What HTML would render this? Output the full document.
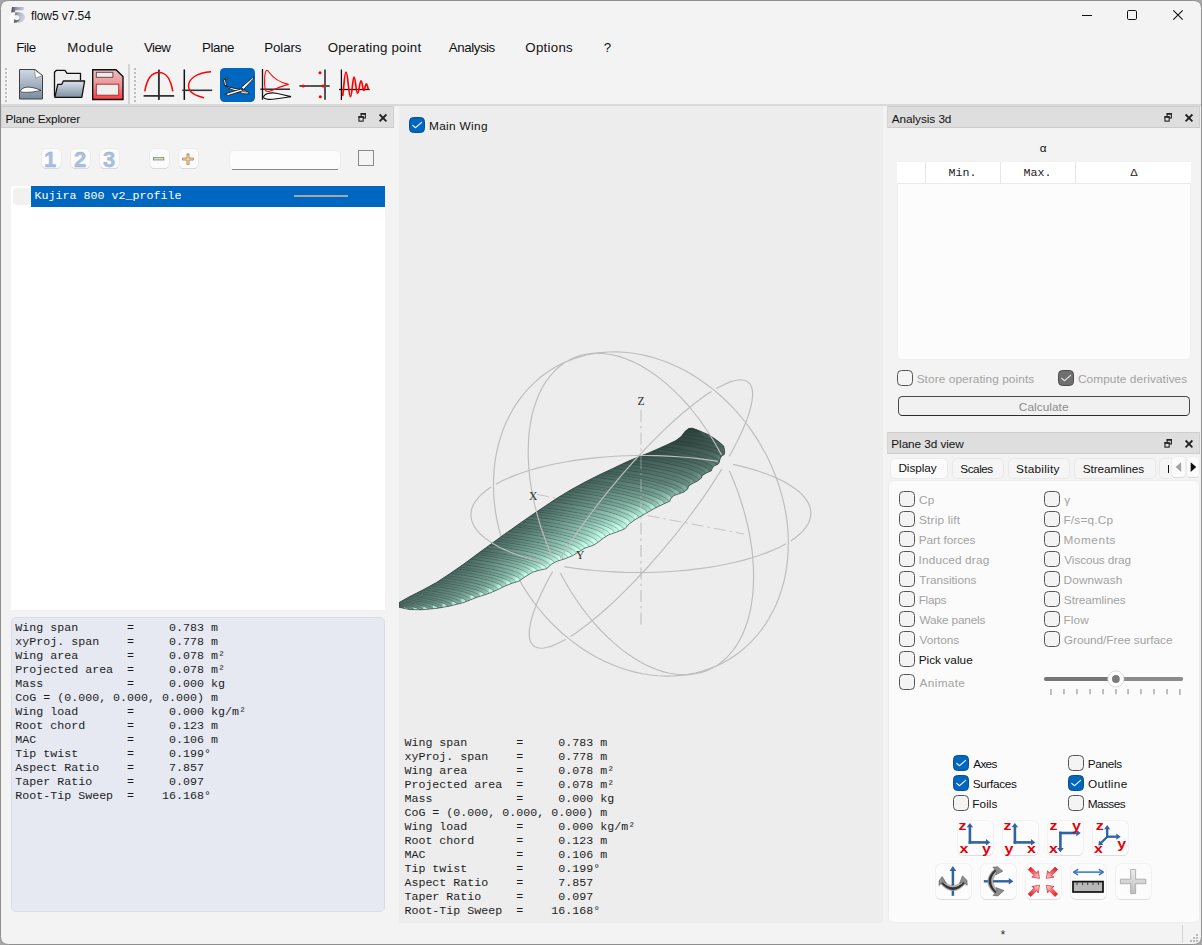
<!DOCTYPE html>
<html>
<head>
<meta charset="utf-8">
<title>flow5 v7.54</title>
<style>
html,body{margin:0;padding:0;}
body{width:1202px;height:945px;overflow:hidden;background:#f3f3f3;font-family:"Liberation Sans",sans-serif;font-size:12px;color:#000;position:relative;}
#win{position:absolute;left:0;top:0;width:1202px;height:945px;background:#f3f3f3;overflow:hidden;}
.abs{position:absolute;}
.t{position:absolute;white-space:pre;line-height:1;}
svg{overflow:visible;}
</style>
</head>
<body>
<div id="win">
<!-- chrome -->
<svg class="abs" style="left:8px;top:5px;" width="20" height="20" viewBox="8 5 20 20" >
<defs><linearGradient id="g5a" x1="0" y1="0" x2="1" y2="0"><stop offset="0" stop-color="#484853"/><stop offset="0.45" stop-color="#9a9aab"/><stop offset="1" stop-color="#c9c9dc"/></linearGradient>
<linearGradient id="g5b" x1="0" y1="0" x2="1" y2="0.25"><stop offset="0" stop-color="#5d5d6a"/><stop offset="0.5" stop-color="#b4b4c6"/><stop offset="1" stop-color="#cfcfe0"/></linearGradient></defs>
<path d="M12 7.1 H23.8 V10.3 H15.3 L14.9 12.9 L11.2 12.6 Z" fill="url(#g5a)"/>
<path d="M14.4 12.7 C17.5 11.7 24.9 12.2 24.9 17.2 C24.9 21.9 20 23 13.6 22.7 L13.8 19.6 C14.6 20.4 19.4 21 19.4 17.6 C19.4 15.2 17 15 14.2 15.6 Z" fill="url(#g5b)"/>
<path d="M13.6 22.7 L13.9 18.8 C15 20.6 19 20.8 19.5 18 C19.8 20.4 17.5 22.9 13.6 22.7 Z" fill="#686876"/>
<circle cx="17.3" cy="18" r="1.9" fill="#f4f4f8"/>
<path d="M10.2 22.8 L10.5 17.5 L9.1 17.5 L9.2 15.8 L10.6 15.8 C10.7 13.2 12.2 12.2 14.9 12.6 L14.8 14.6 C13.9 14.4 13.6 14.9 13.6 15.8 L15 15.8 L14.9 17.5 L13.6 17.5 L13.5 22.8 Z" fill="#ffffff" stroke="#ffffff" stroke-width="0.5"/>
</svg>
<div class="t" style="left:30.92px;top:10.00px;font-family:'Liberation Sans',sans-serif;font-size:12.00px;letter-spacing:-0.078px;color:#111;">flow5 v7.54</div>
<svg class="abs" style="left:1080px;top:5px;" width="115" height="22" viewBox="1080 5 115 22" >
<path d="M1082 15.5 H1092" stroke="#111" stroke-width="1" fill="none"/>
<rect x="1127.5" y="10.5" width="9" height="9" rx="1.2" fill="none" stroke="#111" stroke-width="1"/>
<path d="M1173.3 10.3 L1182.7 19.7 M1182.7 10.3 L1173.3 19.7" stroke="#111" stroke-width="1.1" fill="none"/>
</svg>
<div class="t" style="left:16.20px;top:41.00px;font-family:'Liberation Sans',sans-serif;font-size:13.30px;letter-spacing:-0.484px;color:#111;">File</div>
<div class="t" style="left:67.30px;top:41.00px;font-family:'Liberation Sans',sans-serif;font-size:13.30px;letter-spacing:0.454px;color:#111;">Module</div>
<div class="t" style="left:143.93px;top:41.00px;font-family:'Liberation Sans',sans-serif;font-size:13.30px;letter-spacing:-0.521px;color:#111;">View</div>
<div class="t" style="left:202.10px;top:41.00px;font-family:'Liberation Sans',sans-serif;font-size:13.30px;letter-spacing:-0.438px;color:#111;">Plane</div>
<div class="t" style="left:264.30px;top:41.00px;font-family:'Liberation Sans',sans-serif;font-size:13.30px;letter-spacing:-0.129px;color:#111;">Polars</div>
<div class="t" style="left:327.67px;top:41.00px;font-family:'Liberation Sans',sans-serif;font-size:13.30px;letter-spacing:0.178px;color:#111;">Operating point</div>
<div class="t" style="left:448.77px;top:41.00px;font-family:'Liberation Sans',sans-serif;font-size:13.30px;letter-spacing:-0.430px;color:#111;">Analysis</div>
<div class="t" style="left:525.37px;top:41.00px;font-family:'Liberation Sans',sans-serif;font-size:13.30px;letter-spacing:0.258px;color:#111;">Options</div>
<div class="t" style="left:603.77px;top:41.00px;font-family:'Liberation Sans',sans-serif;font-size:13.30px;letter-spacing:0.000px;color:#111;">?</div>
<div class="abs" style="left:0px;top:104px;width:1202px;height:2px;background:#d9d9d9;"></div>
<svg class="abs" style="left:0px;top:60px;" width="400" height="46" viewBox="0 60 400 46" ><rect x="5" y="68" width="2" height="2" fill="#bdbdbd"/><rect x="7" y="68" width="1" height="1" fill="#fdfdfd"/><rect x="5" y="72" width="2" height="2" fill="#bdbdbd"/><rect x="7" y="72" width="1" height="1" fill="#fdfdfd"/><rect x="5" y="76" width="2" height="2" fill="#bdbdbd"/><rect x="7" y="76" width="1" height="1" fill="#fdfdfd"/><rect x="5" y="80" width="2" height="2" fill="#bdbdbd"/><rect x="7" y="80" width="1" height="1" fill="#fdfdfd"/><rect x="5" y="84" width="2" height="2" fill="#bdbdbd"/><rect x="7" y="84" width="1" height="1" fill="#fdfdfd"/><rect x="5" y="88" width="2" height="2" fill="#bdbdbd"/><rect x="7" y="88" width="1" height="1" fill="#fdfdfd"/><rect x="5" y="92" width="2" height="2" fill="#bdbdbd"/><rect x="7" y="92" width="1" height="1" fill="#fdfdfd"/><rect x="5" y="96" width="2" height="2" fill="#bdbdbd"/><rect x="7" y="96" width="1" height="1" fill="#fdfdfd"/><rect x="5" y="100" width="2" height="2" fill="#bdbdbd"/><rect x="7" y="100" width="1" height="1" fill="#fdfdfd"/><rect x="134" y="68" width="2" height="2" fill="#bdbdbd"/><rect x="136" y="68" width="1" height="1" fill="#fdfdfd"/><rect x="134" y="72" width="2" height="2" fill="#bdbdbd"/><rect x="136" y="72" width="1" height="1" fill="#fdfdfd"/><rect x="134" y="76" width="2" height="2" fill="#bdbdbd"/><rect x="136" y="76" width="1" height="1" fill="#fdfdfd"/><rect x="134" y="80" width="2" height="2" fill="#bdbdbd"/><rect x="136" y="80" width="1" height="1" fill="#fdfdfd"/><rect x="134" y="84" width="2" height="2" fill="#bdbdbd"/><rect x="136" y="84" width="1" height="1" fill="#fdfdfd"/><rect x="134" y="88" width="2" height="2" fill="#bdbdbd"/><rect x="136" y="88" width="1" height="1" fill="#fdfdfd"/><rect x="134" y="92" width="2" height="2" fill="#bdbdbd"/><rect x="136" y="92" width="1" height="1" fill="#fdfdfd"/><rect x="134" y="96" width="2" height="2" fill="#bdbdbd"/><rect x="136" y="96" width="1" height="1" fill="#fdfdfd"/><rect x="134" y="100" width="2" height="2" fill="#bdbdbd"/><rect x="136" y="100" width="1" height="1" fill="#fdfdfd"/>
<defs>
<linearGradient id="gdoc" x1="0" y1="0" x2="0" y2="1"><stop offset="0" stop-color="#cfd9e5"/><stop offset="1" stop-color="#7b8b9d"/></linearGradient>
<linearGradient id="gfold" x1="0" y1="0" x2="0" y2="1"><stop offset="0" stop-color="#dbe3ec"/><stop offset="1" stop-color="#7f8fa2"/></linearGradient>
<linearGradient id="gsave" x1="0" y1="0" x2="0" y2="1"><stop offset="0" stop-color="#e6c3c4"/><stop offset="0.55" stop-color="#f08e90"/><stop offset="1" stop-color="#ff3a3c"/></linearGradient>
</defs>
<!-- new -->
<path d="M19.5 69.5 H35 L42.5 75.5 V99 H19.5 Z" fill="url(#gdoc)" stroke="#3c4046" stroke-width="1"/>
<path d="M34.5 69.8 L42.2 75.6 L35.6 78.2 Z" fill="#fff" stroke="#555" stroke-width="0.5"/>
<path d="M20.6 90.8 C22.5 86.5 30 85.5 41 90.4 C36 91.8 27 92.8 22.5 92.2 C21 92 20.4 91.5 20.6 90.8 Z" fill="#fff" stroke="#222" stroke-width="0.7"/>
<!-- open -->
<path d="M54.5 96.5 V72.3 L56.5 70.3 H65 L67 73.3 H80.5 V80.5" fill="#f0f0f0" stroke="#111" stroke-width="1.3" stroke-linejoin="round"/>
<path d="M54.8 97.3 L57.8 84.3 H61.8 L63.3 81 H84.6 L81.8 97.3 Z" fill="url(#gfold)" stroke="#111" stroke-width="1.3" stroke-linejoin="round"/>
<!-- save -->
<path d="M92.7 69.7 H116 L123 76.5 V99.5 H92.7 Z" fill="url(#gsave)" stroke="#111" stroke-width="1.4" stroke-linejoin="miter"/>
<rect x="96.3" y="72.3" width="16.6" height="5" fill="#ececec" stroke="#6d3a3c" stroke-width="0.9"/>
<rect x="96.3" y="84.2" width="22.4" height="11" fill="#eeeeee" stroke="#a83236" stroke-width="1"/>
<!-- separator -->
<rect x="128" y="64" width="2" height="40" fill="#d4d4d4"/>
<!-- icon 1: arch -->
<path d="M158.9 69.6 V99.9" stroke="#333" stroke-width="1.9"/>
<path d="M143.6 95.9 H174.2" stroke="#2a2a2a" stroke-width="1.7"/>
<path d="M144.8 91.4 C147 78 151.5 72.6 158.9 72.6 C166.3 72.6 170.5 78 172.8 91.4" fill="none" stroke="#f00" stroke-width="1.5"/>
<!-- icon 2 -->
<path d="M184.3 69.5 V99.9" stroke="#111" stroke-width="1.5"/>
<path d="M182.3 90.3 H212.2" stroke="#333" stroke-width="1.6"/>
<path d="M211 71.7 C197 72.5 188.5 79 188.5 86 C188.5 91 194 95.5 204 97.7" fill="none" stroke="#f00" stroke-width="1.4"/>
<!-- icon 3 selected -->
<rect x="220" y="68" width="35" height="34" rx="4.5" fill="#0067c0"/>
<g stroke="#1a1a1a" stroke-width="0.9" fill="#fff" stroke-linejoin="round">
<path d="M222.6 79.6 L227.6 77.6 L227.9 78.6 L223.4 80.6 Z"/>
<path d="M223.6 80 L225.4 79.3 L226.6 86.3 L224.6 85.6 Z"/>
<path d="M224.8 85.4 C228 87.6 236 88.6 241.5 89.4 C246 90.3 248.8 92.2 248.8 93.6 C246.6 94.4 243 93.8 240 92.4 C235 90.6 228 89 224.8 85.4 Z"/>
<path d="M241.4 87.2 L252.6 77.6 L253.8 76.8 L253.4 79 L243.6 89.4 Z"/>
<path d="M240.8 89 L243.4 90.6 L228.4 95.4 L224.8 94.2 L226 93.6 Z"/>
<path d="M242.6 90.4 C244.4 89.8 246.2 90.8 247 92.2 L243.4 92 Z" fill="#9db0c0" stroke-width="0.5"/>
</g>
<!-- icon 4 Cp -->
<path d="M262.5 69 V99.8" stroke="#111" stroke-width="1.3"/>
<path d="M260.3 89.2 H290" stroke="#111" stroke-width="1.3"/>
<path d="M265.2 89.6 C264 82 264.6 70.6 266.8 70.3 C269.4 70 270.5 80.5 288.6 84.4 C280 86.2 272.6 90.6 268.4 91.4 C266.6 91.6 265.6 91 265.2 89.6 Z" fill="none" stroke="#f00" stroke-width="1.1"/>
<path d="M263.6 96.6 C264.4 93.6 270.4 92.2 276 93.3 C281.6 94.3 287 95.6 291 96.6 C285 97.6 274 99.6 268.6 99.4 C265.4 99.2 263.3 98.3 263.6 96.6 Z" fill="#fff" stroke="#111" stroke-width="1.1"/>
<!-- icon 5 root locus -->
<path d="M325 69.5 V99.8" stroke="#555" stroke-width="2"/>
<path d="M299.4 86 H329.7" stroke="#555" stroke-width="2"/>
<circle cx="303.2" cy="86" r="1.55" fill="#f00"/><circle cx="323" cy="86" r="1.55" fill="#f00"/>
<circle cx="320" cy="72.7" r="1.55" fill="#f00"/><circle cx="320.3" cy="96.8" r="1.55" fill="#f00"/>
<!-- icon 6 oscillation -->
<path d="M341.4 69.5 V100" stroke="#111" stroke-width="1.3"/>
<path d="M339 89.5 H369.7" stroke="#111" stroke-width="1.3"/>
<path d="M342.6 96 C343.6 92 344.4 72.2 346 72.2 C348 72.2 348.6 96.6 350.4 96.6 C352.2 96.6 352.6 77 354 77 C355.6 77 355.9 93.2 357.6 93.2 C359.2 93.2 359.6 80.8 361 80.8 C362.4 80.8 362.6 90.4 363.8 90.4 C365 90.4 365.2 83.8 366.3 83.8 C367.4 83.8 367.6 88.4 368.6 89.4" fill="none" stroke="#f00" stroke-width="1.7" stroke-linejoin="round"/>
</svg>
<!-- left -->
<div class="abs" style="left:1px;top:106px;width:393.3px;height:22px;background:#dedede;border-top:1px solid #cecece;border-bottom:1px solid #cbcbcb;border-right:1px solid #d0d0d0;border-left:1px solid #d4d4d4;box-sizing:border-box;"></div>
<div class="t" style="left:5.53px;top:114.00px;font-family:'Liberation Sans',sans-serif;font-size:11.80px;letter-spacing:-0.212px;color:#111;">Plane Explorer</div>
<svg class="abs" style="left:354.3px;top:106px;" width="40" height="22" viewBox="354.3 106 40 22" >
<rect x="361.45" y="113.65" width="4.2" height="4.4" fill="none" stroke="#222" stroke-width="1.1"/>
<rect x="360.90" y="113.10" width="5.3" height="1.6" fill="#222"/>
<rect x="359.25" y="116.75" width="4.2" height="4.4" fill="#dedede" stroke="#222" stroke-width="1.1"/>
<rect x="358.70" y="116.20" width="5.3" height="1.6" fill="#222"/>
<path d="M379.90 114.50 L386.70 121.30 M386.70 114.50 L379.90 121.30" stroke="#222" stroke-width="1.8" fill="none"/>
</svg>
<div class="abs" style="left:42px;top:149.3px;width:19.2px;height:19px;background:#fbfbfb;border-radius:4.5px;box-shadow:0 0 0 0.6px #e6e6e6, 0 1px 0 0 #cfcfcf;"></div>
<div class="abs" style="left:71px;top:149.3px;width:19.2px;height:19px;background:#fbfbfb;border-radius:4.5px;box-shadow:0 0 0 0.6px #e6e6e6, 0 1px 0 0 #cfcfcf;"></div>
<div class="abs" style="left:100px;top:149.3px;width:19.2px;height:19px;background:#fbfbfb;border-radius:4.5px;box-shadow:0 0 0 0.6px #e6e6e6, 0 1px 0 0 #cfcfcf;"></div>
<div class="abs" style="left:150px;top:149.3px;width:19.2px;height:19px;background:#fbfbfb;border-radius:4.5px;box-shadow:0 0 0 0.6px #e6e6e6, 0 1px 0 0 #cfcfcf;"></div>
<div class="abs" style="left:179px;top:149.3px;width:19.2px;height:19px;background:#fbfbfb;border-radius:4.5px;box-shadow:0 0 0 0.6px #e6e6e6, 0 1px 0 0 #cfcfcf;"></div>
<svg class="abs" style="left:40px;top:145px;" width="165" height="30" viewBox="40 145 165 30" ><text x="50.2" y="167" font-family="Liberation Sans" font-weight="bold" font-size="22" text-anchor="middle" fill="#aac0dc" stroke="#94abca" stroke-width="0.35">1</text><text x="80" y="167" font-family="Liberation Sans" font-weight="bold" font-size="22" text-anchor="middle" fill="#aac0dc" stroke="#94abca" stroke-width="0.35">2</text><text x="109" y="167" font-family="Liberation Sans" font-weight="bold" font-size="22" text-anchor="middle" fill="#aac0dc" stroke="#94abca" stroke-width="0.35">3</text><rect x="153.3" y="157.6" width="10.6" height="2.4" fill="#cbe2b6" stroke="#7a7a7a" stroke-width="0.7"/><path d="M186.9 153.8 H189.1 V158 H193.4 V160.1 H189.1 V164.4 H186.9 V160.1 H182.5 V158 H186.9 Z" fill="#fbcfa2" stroke="#7d5c3a" stroke-width="0.55"/></svg>
<div class="abs" style="left:229px;top:150px;width:112px;height:20px;background:#fcfcfc;border:1px solid #ececec;border-radius:5px;box-sizing:border-box;"></div>
<div class="abs" style="left:232px;top:169px;width:105.5px;height:1px;background:#868686;"></div>
<div class="abs" style="left:358px;top:150px;width:16px;height:16px;background:#f4f4f4;border:1px solid #8a8a8a;box-sizing:border-box;"></div>
<div class="abs" style="left:11px;top:186px;width:374px;height:424px;background:#ffffff;"></div>
<div class="abs" style="left:13px;top:188px;width:18px;height:17px;background:#f1f1f1;border-radius:4px;"></div>
<div class="abs" style="left:31px;top:186px;width:354px;height:21px;background:#0067c0;"></div>
<div class="t" style="left:34.6px;top:191.00px;font-family:'Liberation Mono',monospace;font-size:11.667px;letter-spacing:0.00px;color:#fff;transform:scaleY(0.900);transform-origin:0 8px;">Kujira 800 v2_profile</div>
<div class="abs" style="left:294px;top:195px;width:54px;height:2px;background:#a6a6a6;"></div>
<div class="abs" style="left:11px;top:617px;width:374px;height:295px;background:#e6e9f2;border:1px solid #d9dde7;border-radius:5px;box-sizing:border-box;"></div>
<div class="t" style="left:15.20px;top:623.00px;font-family:'Liberation Mono',monospace;font-size:11.667px;letter-spacing:0.00px;color:#1c1c1c;transform:scaleY(0.900);transform-origin:0 8px;">Wing span       =     0.783 m</div>
<div class="t" style="left:15.20px;top:637.00px;font-family:'Liberation Mono',monospace;font-size:11.667px;letter-spacing:0.00px;color:#1c1c1c;transform:scaleY(0.900);transform-origin:0 8px;">xyProj. span    =     0.778 m</div>
<div class="t" style="left:15.20px;top:651.00px;font-family:'Liberation Mono',monospace;font-size:11.667px;letter-spacing:0.00px;color:#1c1c1c;transform:scaleY(0.900);transform-origin:0 8px;">Wing area       =     0.078 m²</div>
<div class="t" style="left:15.20px;top:665.00px;font-family:'Liberation Mono',monospace;font-size:11.667px;letter-spacing:0.00px;color:#1c1c1c;transform:scaleY(0.900);transform-origin:0 8px;">Projected area  =     0.078 m²</div>
<div class="t" style="left:15.20px;top:679.00px;font-family:'Liberation Mono',monospace;font-size:11.667px;letter-spacing:0.00px;color:#1c1c1c;transform:scaleY(0.900);transform-origin:0 8px;">Mass            =     0.000 kg</div>
<div class="t" style="left:15.20px;top:693.00px;font-family:'Liberation Mono',monospace;font-size:11.667px;letter-spacing:0.00px;color:#1c1c1c;transform:scaleY(0.900);transform-origin:0 8px;">CoG = (0.000, 0.000, 0.000) m</div>
<div class="t" style="left:15.20px;top:707.00px;font-family:'Liberation Mono',monospace;font-size:11.667px;letter-spacing:0.00px;color:#1c1c1c;transform:scaleY(0.900);transform-origin:0 8px;">Wing load       =     0.000 kg/m²</div>
<div class="t" style="left:15.20px;top:721.00px;font-family:'Liberation Mono',monospace;font-size:11.667px;letter-spacing:0.00px;color:#1c1c1c;transform:scaleY(0.900);transform-origin:0 8px;">Root chord      =     0.123 m</div>
<div class="t" style="left:15.20px;top:735.00px;font-family:'Liberation Mono',monospace;font-size:11.667px;letter-spacing:0.00px;color:#1c1c1c;transform:scaleY(0.900);transform-origin:0 8px;">MAC             =     0.106 m</div>
<div class="t" style="left:15.20px;top:749.00px;font-family:'Liberation Mono',monospace;font-size:11.667px;letter-spacing:0.00px;color:#1c1c1c;transform:scaleY(0.900);transform-origin:0 8px;">Tip twist       =     0.199°</div>
<div class="t" style="left:15.20px;top:763.00px;font-family:'Liberation Mono',monospace;font-size:11.667px;letter-spacing:0.00px;color:#1c1c1c;transform:scaleY(0.900);transform-origin:0 8px;">Aspect Ratio    =     7.857</div>
<div class="t" style="left:15.20px;top:777.00px;font-family:'Liberation Mono',monospace;font-size:11.667px;letter-spacing:0.00px;color:#1c1c1c;transform:scaleY(0.900);transform-origin:0 8px;">Taper Ratio     =     0.097</div>
<div class="t" style="left:15.20px;top:791.00px;font-family:'Liberation Mono',monospace;font-size:11.667px;letter-spacing:0.00px;color:#1c1c1c;transform:scaleY(0.900);transform-origin:0 8px;">Root-Tip Sweep  =    16.168°</div>
<!-- gl -->
<div class="abs" style="left:399px;top:106px;width:484px;height:817px;background:#ededed;overflow:hidden;"></div>
<div class="abs" style="left:409px;top:117px;width:16px;height:16px;background:#0067c0;border:1px solid #0b4f8f;border-radius:4.5px;box-sizing:border-box;"></div>
<svg class="abs" style="left:409px;top:117px;" width="16" height="16" viewBox="409 117 16 16" ><path d="M412.7 125.4 L415.6 127.7 L421.6 122.4" fill="none" stroke="#fff" stroke-width="1.1" stroke-linecap="round" stroke-linejoin="round"/></svg>
<div class="t" style="left:429.03px;top:121.00px;font-family:'Liberation Sans',sans-serif;font-size:11.80px;letter-spacing:0.348px;color:#111;">Main Wing</div>
<div class="abs" style="left:399px;top:106px;width:484px;height:817px;overflow:hidden;"><svg class="abs" style="left:0;top:0" width="484" height="817" viewBox="399 106 484 817"><g fill="none" stroke="#bdbdbd" stroke-width="1.15"><path d="M552.9 368.6 L559.2 365.0 L565.7 361.9 L572.5 359.2 L579.4 356.9 L586.5 355.0 L593.7 353.6 L601.1 352.6 L608.6 352.0 L616.2 351.9 L623.8 352.2 L631.5 353.0 L639.2 354.3 L646.9 355.9 L654.6 358.0 L662.3 360.5 L669.9 363.5 L677.4 366.8 L684.9 370.6 L692.2 374.7 L699.3 379.3 L706.3 384.2 L713.2 389.4 L719.8 395.0 L726.2 401.0 L732.4 407.2 L738.3 413.7 L744.0 420.5 L749.4 427.6 L754.4 434.9 L759.2 442.4 L763.6 450.1 L767.8 458.0 L771.5 466.0 L774.9 474.2 L778.0 482.5 L780.6 490.9 L782.9 499.3 L784.8 507.7 L786.3 516.2 L787.4 524.7 L788.1 533.2 L788.3 541.6 L788.2 549.9 L787.7 558.1 L786.8 566.2 L785.5 574.2 L783.8 582.0 L781.6 589.6 L779.2 597.0 L776.3 604.2 L773.0 611.1 L769.4 617.7 L765.5 624.1 L761.2 630.2 L756.5 636.0 L751.6 641.4 L746.3 646.4 L740.8 651.2 L735.0 655.5 L728.9 659.4"/><path d="M728.9 659.4 L722.6 663.0 L716.1 666.1 L709.3 668.8 L702.4 671.1 L695.3 673.0 L688.1 674.4 L680.7 675.4 L673.2 676.0 L665.6 676.1 L658.0 675.8 L650.3 675.0 L642.6 673.7 L634.9 672.1 L627.2 670.0 L619.5 667.5 L611.9 664.5 L604.4 661.2 L596.9 657.4 L589.6 653.3 L582.5 648.7 L575.5 643.8 L568.6 638.6 L562.0 633.0 L555.6 627.0 L549.4 620.8 L543.5 614.3 L537.8 607.5 L532.4 600.4 L527.4 593.1 L522.6 585.6 L518.2 577.9 L514.0 570.0 L510.3 562.0 L506.9 553.8 L503.8 545.5 L501.2 537.1 L498.9 528.7 L497.0 520.3 L495.5 511.8 L494.4 503.3 L493.7 494.8 L493.5 486.4 L493.6 478.1 L494.1 469.9 L495.0 461.8 L496.3 453.8 L498.0 446.0 L500.2 438.4 L502.6 431.0 L505.5 423.8 L508.8 416.9 L512.4 410.3 L516.3 403.9 L520.6 397.8 L525.3 392.0 L530.2 386.6 L535.5 381.6 L541.0 376.8 L546.8 372.5 L552.9 368.6"/></g><path d="M537 494.4 L744 534" stroke="#c2c2c2" stroke-width="0.95" stroke-dasharray="12 4 2.5 4" fill="none"/><path d="M641 410 V625" stroke="#c6c6c6" stroke-width="1.3" stroke-dasharray="12 4 2.5 4" fill="none"/><defs><linearGradient id="w0" gradientUnits="userSpaceOnUse" x1="394.6" y1="607.9" x2="391.1" y2="606.9"><stop offset="0" stop-color="#b0e5d2"/><stop offset="0.035" stop-color="#84ada0"/><stop offset="0.1" stop-color="#789e92"/><stop offset="0.25" stop-color="#6a8e83"/><stop offset="0.5" stop-color="#5e8076"/><stop offset="0.75" stop-color="#56766d"/><stop offset="1" stop-color="#506f66"/></linearGradient><linearGradient id="w2" gradientUnits="userSpaceOnUse" x1="404.2" y1="608.4" x2="393.6" y2="605.6"><stop offset="0" stop-color="#b0e5d2"/><stop offset="0.035" stop-color="#84ada0"/><stop offset="0.1" stop-color="#789e92"/><stop offset="0.25" stop-color="#6a8e83"/><stop offset="0.5" stop-color="#5e8076"/><stop offset="0.75" stop-color="#56766d"/><stop offset="1" stop-color="#506f66"/></linearGradient><linearGradient id="w4" gradientUnits="userSpaceOnUse" x1="413.8" y1="609.6" x2="395.3" y2="604.6"><stop offset="0" stop-color="#b1e6d3"/><stop offset="0.035" stop-color="#83ac9f"/><stop offset="0.1" stop-color="#789e92"/><stop offset="0.25" stop-color="#6a8e83"/><stop offset="0.5" stop-color="#5e8076"/><stop offset="0.75" stop-color="#56766d"/><stop offset="1" stop-color="#506f66"/></linearGradient><linearGradient id="w6" gradientUnits="userSpaceOnUse" x1="423.5" y1="609.4" x2="398.6" y2="602.8"><stop offset="0" stop-color="#b1e6d3"/><stop offset="0.035" stop-color="#83ac9f"/><stop offset="0.1" stop-color="#789e92"/><stop offset="0.25" stop-color="#6a8e83"/><stop offset="0.5" stop-color="#5e8076"/><stop offset="0.75" stop-color="#56766d"/><stop offset="1" stop-color="#506f66"/></linearGradient><linearGradient id="w8" gradientUnits="userSpaceOnUse" x1="433.1" y1="608.7" x2="402.7" y2="600.5"><stop offset="0" stop-color="#b1e6d3"/><stop offset="0.035" stop-color="#83ac9f"/><stop offset="0.1" stop-color="#779e92"/><stop offset="0.25" stop-color="#6a8f84"/><stop offset="0.5" stop-color="#5f8177"/><stop offset="0.75" stop-color="#56776e"/><stop offset="1" stop-color="#506f66"/></linearGradient><linearGradient id="w10" gradientUnits="userSpaceOnUse" x1="442.7" y1="607.3" x2="407.4" y2="597.8"><stop offset="0" stop-color="#b2e7d4"/><stop offset="0.035" stop-color="#82ab9e"/><stop offset="0.1" stop-color="#779e92"/><stop offset="0.25" stop-color="#6a8f84"/><stop offset="0.5" stop-color="#5f8177"/><stop offset="0.75" stop-color="#56776e"/><stop offset="1" stop-color="#506f66"/></linearGradient><linearGradient id="w12" gradientUnits="userSpaceOnUse" x1="452.2" y1="605.4" x2="413.0" y2="594.9"><stop offset="0" stop-color="#b3e8d5"/><stop offset="0.035" stop-color="#84ada0"/><stop offset="0.1" stop-color="#789f93"/><stop offset="0.25" stop-color="#6b9085"/><stop offset="0.5" stop-color="#5f8277"/><stop offset="0.75" stop-color="#56776e"/><stop offset="1" stop-color="#506f66"/></linearGradient><linearGradient id="w14" gradientUnits="userSpaceOnUse" x1="461.6" y1="602.9" x2="419.5" y2="591.6"><stop offset="0" stop-color="#b5ead7"/><stop offset="0.035" stop-color="#8ab5a8"/><stop offset="0.1" stop-color="#7da599"/><stop offset="0.25" stop-color="#6e9488"/><stop offset="0.5" stop-color="#61847a"/><stop offset="0.75" stop-color="#56786f"/><stop offset="1" stop-color="#4f6e66"/></linearGradient><linearGradient id="w16" gradientUnits="userSpaceOnUse" x1="470.8" y1="599.7" x2="426.6" y2="587.9"><stop offset="0" stop-color="#b8edda"/><stop offset="0.035" stop-color="#91beaf"/><stop offset="0.1" stop-color="#81ab9e"/><stop offset="0.25" stop-color="#71988b"/><stop offset="0.5" stop-color="#63867c"/><stop offset="0.75" stop-color="#57796f"/><stop offset="1" stop-color="#4e6e65"/></linearGradient><linearGradient id="w18" gradientUnits="userSpaceOnUse" x1="479.9" y1="596.5" x2="433.6" y2="584.0"><stop offset="0" stop-color="#baf0dd"/><stop offset="0.035" stop-color="#97c6b7"/><stop offset="0.1" stop-color="#85b1a3"/><stop offset="0.25" stop-color="#749c8f"/><stop offset="0.5" stop-color="#64897e"/><stop offset="0.75" stop-color="#577970"/><stop offset="1" stop-color="#4e6d65"/></linearGradient><linearGradient id="w20" gradientUnits="userSpaceOnUse" x1="489.0" y1="593.2" x2="440.1" y2="580.1"><stop offset="0" stop-color="#bdf3e0"/><stop offset="0.035" stop-color="#9dcebe"/><stop offset="0.1" stop-color="#8ab7a8"/><stop offset="0.25" stop-color="#769f92"/><stop offset="0.5" stop-color="#668b80"/><stop offset="0.75" stop-color="#587a70"/><stop offset="1" stop-color="#4d6d64"/></linearGradient><linearGradient id="w22" gradientUnits="userSpaceOnUse" x1="497.9" y1="589.4" x2="446.8" y2="575.7"><stop offset="0" stop-color="#bff5e2"/><stop offset="0.035" stop-color="#a4d6c5"/><stop offset="0.1" stop-color="#8ebdad"/><stop offset="0.25" stop-color="#79a395"/><stop offset="0.5" stop-color="#688d82"/><stop offset="0.75" stop-color="#587b71"/><stop offset="1" stop-color="#4c6c64"/></linearGradient><linearGradient id="w24" gradientUnits="userSpaceOnUse" x1="506.8" y1="585.5" x2="453.5" y2="571.2"><stop offset="0" stop-color="#c2f7e4"/><stop offset="0.035" stop-color="#a9dccb"/><stop offset="0.1" stop-color="#93c2b2"/><stop offset="0.25" stop-color="#7da89a"/><stop offset="0.5" stop-color="#6a9084"/><stop offset="0.75" stop-color="#597c72"/><stop offset="1" stop-color="#4b6b63"/></linearGradient><linearGradient id="w26" gradientUnits="userSpaceOnUse" x1="515.8" y1="581.9" x2="459.7" y2="566.9"><stop offset="0" stop-color="#c4f9e6"/><stop offset="0.035" stop-color="#aee2d0"/><stop offset="0.1" stop-color="#98c8b8"/><stop offset="0.25" stop-color="#81ad9f"/><stop offset="0.5" stop-color="#6c9487"/><stop offset="0.75" stop-color="#5a7d73"/><stop offset="1" stop-color="#4a6a62"/></linearGradient><linearGradient id="w28" gradientUnits="userSpaceOnUse" x1="524.3" y1="577.5" x2="466.5" y2="562.0"><stop offset="0" stop-color="#c6fbe8"/><stop offset="0.035" stop-color="#b3e7d5"/><stop offset="0.1" stop-color="#9ccebd"/><stop offset="0.25" stop-color="#85b3a3"/><stop offset="0.5" stop-color="#6e978a"/><stop offset="0.75" stop-color="#5a7e74"/><stop offset="1" stop-color="#4a6a62"/></linearGradient><linearGradient id="w30" gradientUnits="userSpaceOnUse" x1="532.7" y1="572.8" x2="473.3" y2="556.9"><stop offset="0" stop-color="#c8fdea"/><stop offset="0.035" stop-color="#b8ecda"/><stop offset="0.1" stop-color="#a1d3c2"/><stop offset="0.25" stop-color="#89b8a8"/><stop offset="0.5" stop-color="#70998d"/><stop offset="0.75" stop-color="#5b7f75"/><stop offset="1" stop-color="#496961"/></linearGradient><linearGradient id="w32" gradientUnits="userSpaceOnUse" x1="541.8" y1="569.8" x2="478.8" y2="552.9"><stop offset="0" stop-color="#cafeeb"/><stop offset="0.035" stop-color="#bcf1de"/><stop offset="0.1" stop-color="#a5d8c7"/><stop offset="0.25" stop-color="#8cbcac"/><stop offset="0.5" stop-color="#729c8f"/><stop offset="0.75" stop-color="#5c8076"/><stop offset="1" stop-color="#486860"/></linearGradient><linearGradient id="w34" gradientUnits="userSpaceOnUse" x1="550.4" y1="565.7" x2="485.2" y2="548.2"><stop offset="0" stop-color="#cbfeeb"/><stop offset="0.035" stop-color="#bdf2df"/><stop offset="0.1" stop-color="#a6dac9"/><stop offset="0.25" stop-color="#8dbdad"/><stop offset="0.5" stop-color="#739d90"/><stop offset="0.75" stop-color="#5c8076"/><stop offset="1" stop-color="#486860"/></linearGradient><linearGradient id="w36" gradientUnits="userSpaceOnUse" x1="558.7" y1="561.0" x2="492.1" y2="543.2"><stop offset="0" stop-color="#cbfeec"/><stop offset="0.035" stop-color="#bef3e0"/><stop offset="0.1" stop-color="#a8dbca"/><stop offset="0.25" stop-color="#8ebeae"/><stop offset="0.5" stop-color="#739d90"/><stop offset="0.75" stop-color="#5c8076"/><stop offset="1" stop-color="#486860"/></linearGradient><linearGradient id="w38" gradientUnits="userSpaceOnUse" x1="567.7" y1="557.6" x2="498.0" y2="538.9"><stop offset="0" stop-color="#cbfeec"/><stop offset="0.035" stop-color="#bff4e1"/><stop offset="0.1" stop-color="#a9ddcc"/><stop offset="0.25" stop-color="#8fbfaf"/><stop offset="0.5" stop-color="#739e91"/><stop offset="0.75" stop-color="#5c8177"/><stop offset="1" stop-color="#486860"/></linearGradient><linearGradient id="w40" gradientUnits="userSpaceOnUse" x1="576.4" y1="553.3" x2="504.7" y2="534.1"><stop offset="0" stop-color="#ccfeec"/><stop offset="0.035" stop-color="#c0f5e2"/><stop offset="0.1" stop-color="#aadecd"/><stop offset="0.25" stop-color="#90c1b1"/><stop offset="0.5" stop-color="#749e91"/><stop offset="0.75" stop-color="#5c8177"/><stop offset="1" stop-color="#486860"/></linearGradient><linearGradient id="w42" gradientUnits="userSpaceOnUse" x1="584.9" y1="548.7" x2="511.7" y2="529.1"><stop offset="0" stop-color="#ccffed"/><stop offset="0.035" stop-color="#c0f5e2"/><stop offset="0.1" stop-color="#abe0ce"/><stop offset="0.25" stop-color="#90c2b2"/><stop offset="0.5" stop-color="#749f92"/><stop offset="0.75" stop-color="#5d8177"/><stop offset="1" stop-color="#486860"/></linearGradient><linearGradient id="w44" gradientUnits="userSpaceOnUse" x1="593.6" y1="544.5" x2="518.4" y2="524.4"><stop offset="0" stop-color="#cdffed"/><stop offset="0.035" stop-color="#c1f6e3"/><stop offset="0.1" stop-color="#ace1d0"/><stop offset="0.25" stop-color="#91c3b3"/><stop offset="0.5" stop-color="#759f92"/><stop offset="0.75" stop-color="#5d8177"/><stop offset="1" stop-color="#486860"/></linearGradient><linearGradient id="w46" gradientUnits="userSpaceOnUse" x1="601.8" y1="539.5" x2="525.8" y2="519.2"><stop offset="0" stop-color="#cdffed"/><stop offset="0.035" stop-color="#c2f7e4"/><stop offset="0.1" stop-color="#ade3d1"/><stop offset="0.25" stop-color="#92c4b4"/><stop offset="0.5" stop-color="#75a093"/><stop offset="0.75" stop-color="#5d8278"/><stop offset="1" stop-color="#486860"/></linearGradient><linearGradient id="w48" gradientUnits="userSpaceOnUse" x1="610.1" y1="534.7" x2="533.2" y2="514.1"><stop offset="0" stop-color="#ceffee"/><stop offset="0.035" stop-color="#c3f8e5"/><stop offset="0.1" stop-color="#afe4d2"/><stop offset="0.25" stop-color="#93c5b5"/><stop offset="0.5" stop-color="#76a093"/><stop offset="0.75" stop-color="#5d8278"/><stop offset="1" stop-color="#486860"/></linearGradient><linearGradient id="w50" gradientUnits="userSpaceOnUse" x1="619.1" y1="531.0" x2="539.6" y2="509.7"><stop offset="0" stop-color="#ceffee"/><stop offset="0.035" stop-color="#c4f9e6"/><stop offset="0.1" stop-color="#b0e6d4"/><stop offset="0.25" stop-color="#94c6b6"/><stop offset="0.5" stop-color="#76a194"/><stop offset="0.75" stop-color="#5d8278"/><stop offset="1" stop-color="#486860"/></linearGradient><linearGradient id="w52" gradientUnits="userSpaceOnUse" x1="627.1" y1="526.1" x2="547.2" y2="504.7"><stop offset="0" stop-color="#c8fae9"/><stop offset="0.035" stop-color="#bdf1de"/><stop offset="0.1" stop-color="#a9ddcc"/><stop offset="0.25" stop-color="#8ebfaf"/><stop offset="0.5" stop-color="#739d91"/><stop offset="0.75" stop-color="#5c8177"/><stop offset="1" stop-color="#486860"/></linearGradient><linearGradient id="w54" gradientUnits="userSpaceOnUse" x1="634.7" y1="520.2" x2="555.8" y2="499.0"><stop offset="0" stop-color="#c1f4e3"/><stop offset="0.035" stop-color="#b5e8d6"/><stop offset="0.1" stop-color="#a1d4c3"/><stop offset="0.25" stop-color="#88b7a8"/><stop offset="0.5" stop-color="#70998d"/><stop offset="0.75" stop-color="#5b7f75"/><stop offset="1" stop-color="#47675f"/></linearGradient><linearGradient id="w56" gradientUnits="userSpaceOnUse" x1="642.9" y1="515.1" x2="564.0" y2="493.9"><stop offset="0" stop-color="#baeedc"/><stop offset="0.035" stop-color="#acdfce"/><stop offset="0.1" stop-color="#99caba"/><stop offset="0.25" stop-color="#82aea0"/><stop offset="0.5" stop-color="#6d9589"/><stop offset="0.75" stop-color="#5a7d73"/><stop offset="1" stop-color="#47675f"/></linearGradient><linearGradient id="w58" gradientUnits="userSpaceOnUse" x1="651.4" y1="510.3" x2="572.3" y2="489.1"><stop offset="0" stop-color="#b3e8d6"/><stop offset="0.035" stop-color="#a4d5c5"/><stop offset="0.1" stop-color="#91bfb0"/><stop offset="0.25" stop-color="#7ba698"/><stop offset="0.5" stop-color="#699185"/><stop offset="0.75" stop-color="#597c72"/><stop offset="1" stop-color="#46665e"/></linearGradient><linearGradient id="w60" gradientUnits="userSpaceOnUse" x1="660.0" y1="505.8" x2="580.5" y2="484.5"><stop offset="0" stop-color="#a8dbca"/><stop offset="0.035" stop-color="#99c8b9"/><stop offset="0.1" stop-color="#87b4a5"/><stop offset="0.25" stop-color="#749d90"/><stop offset="0.5" stop-color="#658b7f"/><stop offset="0.75" stop-color="#56786f"/><stop offset="1" stop-color="#45655d"/></linearGradient><linearGradient id="w62" gradientUnits="userSpaceOnUse" x1="667.9" y1="500.8" x2="589.5" y2="479.8"><stop offset="0" stop-color="#9cccbc"/><stop offset="0.035" stop-color="#8dbaac"/><stop offset="0.1" stop-color="#7ea89a"/><stop offset="0.25" stop-color="#6d9488"/><stop offset="0.5" stop-color="#60847a"/><stop offset="0.75" stop-color="#53746b"/><stop offset="1" stop-color="#44635c"/></linearGradient><linearGradient id="w64" gradientUnits="userSpaceOnUse" x1="675.7" y1="495.7" x2="598.9" y2="475.1"><stop offset="0" stop-color="#8fbdae"/><stop offset="0.035" stop-color="#82ad9f"/><stop offset="0.1" stop-color="#759c90"/><stop offset="0.25" stop-color="#668b80"/><stop offset="0.5" stop-color="#5b7e74"/><stop offset="0.75" stop-color="#507068"/><stop offset="1" stop-color="#43625a"/></linearGradient><linearGradient id="w66" gradientUnits="userSpaceOnUse" x1="683.9" y1="491.0" x2="608.2" y2="470.7"><stop offset="0" stop-color="#82ad9f"/><stop offset="0.035" stop-color="#769e92"/><stop offset="0.1" stop-color="#6b9085"/><stop offset="0.25" stop-color="#5f8278"/><stop offset="0.5" stop-color="#56776e"/><stop offset="0.75" stop-color="#4d6c64"/><stop offset="1" stop-color="#426059"/></linearGradient><linearGradient id="w68" gradientUnits="userSpaceOnUse" x1="691.3" y1="485.4" x2="618.3" y2="465.9"><stop offset="0" stop-color="#78a094"/><stop offset="0.035" stop-color="#6d9387"/><stop offset="0.1" stop-color="#63867c"/><stop offset="0.25" stop-color="#5a7b71"/><stop offset="0.5" stop-color="#527168"/><stop offset="0.75" stop-color="#4a675f"/><stop offset="1" stop-color="#415d56"/></linearGradient><linearGradient id="w70" gradientUnits="userSpaceOnUse" x1="698.3" y1="479.4" x2="629.1" y2="460.9"><stop offset="0" stop-color="#71978b"/><stop offset="0.035" stop-color="#668a80"/><stop offset="0.1" stop-color="#5d7f75"/><stop offset="0.25" stop-color="#54746b"/><stop offset="0.5" stop-color="#4d6a63"/><stop offset="0.75" stop-color="#45615a"/><stop offset="1" stop-color="#3d5851"/></linearGradient><linearGradient id="w72" gradientUnits="userSpaceOnUse" x1="705.9" y1="474.0" x2="640.0" y2="456.3"><stop offset="0" stop-color="#688c81"/><stop offset="0.035" stop-color="#5f8177"/><stop offset="0.1" stop-color="#57776e"/><stop offset="0.25" stop-color="#4f6d65"/><stop offset="0.5" stop-color="#47635c"/><stop offset="0.75" stop-color="#415b54"/><stop offset="1" stop-color="#3a524d"/></linearGradient><linearGradient id="w74" gradientUnits="userSpaceOnUse" x1="713.1" y1="468.2" x2="651.2" y2="451.6"><stop offset="0" stop-color="#608378"/><stop offset="0.035" stop-color="#58786f"/><stop offset="0.1" stop-color="#516f67"/><stop offset="0.25" stop-color="#49665f"/><stop offset="0.5" stop-color="#425d57"/><stop offset="0.75" stop-color="#3c554e"/><stop offset="1" stop-color="#374d48"/></linearGradient><linearGradient id="w76" gradientUnits="userSpaceOnUse" x1="718.7" y1="461.1" x2="663.5" y2="446.3"><stop offset="0" stop-color="#5c7d73"/><stop offset="0.035" stop-color="#54736b"/><stop offset="0.1" stop-color="#4d6b63"/><stop offset="0.25" stop-color="#46615b"/><stop offset="0.5" stop-color="#3f5953"/><stop offset="0.75" stop-color="#3a514b"/><stop offset="1" stop-color="#354b46"/></linearGradient><linearGradient id="w78" gradientUnits="userSpaceOnUse" x1="722.7" y1="453.1" x2="675.0" y2="440.4"><stop offset="0" stop-color="#506e65"/><stop offset="0.035" stop-color="#4c6860"/><stop offset="0.1" stop-color="#46615a"/><stop offset="0.25" stop-color="#3f5852"/><stop offset="0.5" stop-color="#39504a"/><stop offset="0.75" stop-color="#354a45"/><stop offset="1" stop-color="#324641"/></linearGradient><linearGradient id="w80" gradientUnits="userSpaceOnUse" x1="721.5" y1="445.5" x2="682.1" y2="434.9"><stop offset="0" stop-color="#506e65"/><stop offset="0.035" stop-color="#4c6860"/><stop offset="0.1" stop-color="#46615a"/><stop offset="0.25" stop-color="#3f5852"/><stop offset="0.5" stop-color="#39504a"/><stop offset="0.75" stop-color="#354a45"/><stop offset="1" stop-color="#324641"/></linearGradient><linearGradient id="w82" gradientUnits="userSpaceOnUse" x1="714.8" y1="439.0" x2="685.6" y2="431.1"><stop offset="0" stop-color="#506e65"/><stop offset="0.035" stop-color="#4c6860"/><stop offset="0.1" stop-color="#46615a"/><stop offset="0.25" stop-color="#3f5852"/><stop offset="0.5" stop-color="#39504a"/><stop offset="0.75" stop-color="#354a45"/><stop offset="1" stop-color="#324641"/></linearGradient><linearGradient id="w84" gradientUnits="userSpaceOnUse" x1="706.5" y1="434.1" x2="688.1" y2="429.1"><stop offset="0" stop-color="#506e65"/><stop offset="0.035" stop-color="#4c6860"/><stop offset="0.1" stop-color="#46615a"/><stop offset="0.25" stop-color="#3f5852"/><stop offset="0.5" stop-color="#39504a"/><stop offset="0.75" stop-color="#354a45"/><stop offset="1" stop-color="#324641"/></linearGradient><linearGradient id="w86" gradientUnits="userSpaceOnUse" x1="699.9" y1="431.0" x2="689.9" y2="428.4"><stop offset="0" stop-color="#506e65"/><stop offset="0.035" stop-color="#4c6860"/><stop offset="0.1" stop-color="#46615a"/><stop offset="0.25" stop-color="#3f5852"/><stop offset="0.5" stop-color="#39504a"/><stop offset="0.75" stop-color="#354a45"/><stop offset="1" stop-color="#324641"/></linearGradient><clipPath id="wclip"><path d="M399.0 602.6 L408.8 597.0 L422.5 590.1 L436.3 582.6 L450.0 573.6 L463.8 564.0 L477.6 553.7 L491.3 543.8 L505.1 533.7 L518.8 524.1 L531.5 515.2 L544.6 506.4 L557.5 497.8 L571.3 489.5 L585.0 482.0 L598.8 475.1 L612.6 468.6 L626.3 462.0 L639.8 456.2 L648.3 453.0 L657.5 449.0 L666.9 444.8 L675.8 440.6 L681.2 436.5 L684.9 431.5 L688.6 428.5 L692.2 428.1 L697.7 430.1 L703.2 432.4 L708.7 434.7 L714.2 438.3 L719.7 442.5 L723.8 446.1 L724.7 451.6 L724.3 454.4 L721.5 456.2 L720.1 458.9 L719.2 462.6 L717.9 464.4 L714.2 465.8 L712.4 468.1 L711.4 470.8 L706.9 472.7 L702.3 475.4 L701.4 478.1 L697.7 480.9 L693.1 483.2 L688.6 485.9 L687.7 489.1 L684.0 491.9 L679.4 493.7 L673.9 495.5 L671.2 498.3 L669.7 501.2 L662.1 504.7 L653.8 508.8 L644.2 514.3 L636.0 519.1 L629.1 523.9 L624.9 528.8 L618.1 531.5 L608.4 535.0 L602.9 538.4 L598.8 541.8 L593.3 545.3 L585.0 548.0 L579.5 551.5 L572.7 555.6 L564.4 559.0 L557.5 561.1 L552.0 563.8 L546.5 568.7 L539.5 570.2 L532.6 572.2 L525.7 576.4 L518.8 581.2 L512.0 583.3 L505.1 586.0 L498.2 589.4 L491.3 592.5 L484.4 595.0 L477.6 597.0 L470.7 599.8 L463.8 602.5 L456.9 604.3 L450.0 606.0 L443.2 607.3 L436.3 608.4 L429.4 609.1 L422.5 609.7 L415.6 609.7 L408.8 609.4 L399.0 607.3 Z"/></clipPath></defs><path d="M399.0 602.6 L408.8 597.0 L422.5 590.1 L436.3 582.6 L450.0 573.6 L463.8 564.0 L477.6 553.7 L491.3 543.8 L505.1 533.7 L518.8 524.1 L531.5 515.2 L544.6 506.4 L557.5 497.8 L571.3 489.5 L585.0 482.0 L598.8 475.1 L612.6 468.6 L626.3 462.0 L639.8 456.2 L648.3 453.0 L657.5 449.0 L666.9 444.8 L675.8 440.6 L681.2 436.5 L684.9 431.5 L688.6 428.5 L692.2 428.1 L697.7 430.1 L703.2 432.4 L708.7 434.7 L714.2 438.3 L719.7 442.5 L723.8 446.1 L724.7 451.6 L724.3 454.4 L721.5 456.2 L720.1 458.9 L719.2 462.6 L717.9 464.4 L714.2 465.8 L712.4 468.1 L711.4 470.8 L706.9 472.7 L702.3 475.4 L701.4 478.1 L697.7 480.9 L693.1 483.2 L688.6 485.9 L687.7 489.1 L684.0 491.9 L679.4 493.7 L673.9 495.5 L671.2 498.3 L669.7 501.2 L662.1 504.7 L653.8 508.8 L644.2 514.3 L636.0 519.1 L629.1 523.9 L624.9 528.8 L618.1 531.5 L608.4 535.0 L602.9 538.4 L598.8 541.8 L593.3 545.3 L585.0 548.0 L579.5 551.5 L572.7 555.6 L564.4 559.0 L557.5 561.1 L552.0 563.8 L546.5 568.7 L539.5 570.2 L532.6 572.2 L525.7 576.4 L518.8 581.2 L512.0 583.3 L505.1 586.0 L498.2 589.4 L491.3 592.5 L484.4 595.0 L477.6 597.0 L470.7 599.8 L463.8 602.5 L456.9 604.3 L450.0 606.0 L443.2 607.3 L436.3 608.4 L429.4 609.1 L422.5 609.7 L415.6 609.7 L408.8 609.4 L399.0 607.3 Z" fill="#3c544d"/><g clip-path="url(#wclip)"><path d="M395.6 614.0 L389.8 608.4 L389.8 608.4 L389.8 608.4 L389.7 608.4 L389.7 608.3 L389.6 608.3 L389.6 608.3 L389.5 608.3 L389.4 608.3 L389.4 608.2 L389.3 608.2 L389.2 608.2 L389.1 608.2 L389.0 608.2 L388.8 608.2 L381.1 600.1 L386.3 597.7 L394.1 605.7 L394.8 605.8 L395.5 605.9 L396.1 606.0 L396.8 606.2 L397.3 606.3 L397.9 606.4 L398.3 606.5 L398.8 606.6 L399.2 606.8 L399.5 606.9 L399.8 607.0 L400.0 607.1 L400.2 607.3 L400.2 607.4 L406.0 612.9 Z" fill="url(#w0)"/><path d="M405.2 612.9 L399.4 607.4 L399.4 607.3 L399.2 607.1 L399.0 607.0 L398.7 606.9 L398.4 606.8 L398.0 606.6 L397.5 606.5 L397.1 606.4 L396.5 606.3 L396.0 606.2 L395.3 606.0 L394.7 605.9 L394.0 605.8 L393.3 605.7 L385.5 597.7 L387.0 597.3 L394.7 605.4 L396.5 605.6 L398.2 605.9 L399.8 606.1 L401.3 606.4 L402.6 606.7 L403.9 606.9 L405.1 607.2 L406.2 607.5 L407.1 607.8 L407.9 608.2 L408.6 608.5 L409.2 608.8 L409.6 609.1 L409.7 609.4 L415.5 615.0 Z" fill="url(#w2)"/><path d="M414.7 615.0 L408.9 609.4 L408.8 609.1 L408.4 608.8 L407.8 608.5 L407.1 608.2 L406.3 607.8 L405.4 607.5 L404.3 607.2 L403.1 606.9 L401.8 606.7 L400.5 606.4 L399.0 606.1 L397.4 605.9 L395.7 605.6 L393.9 605.4 L386.2 597.3 L389.8 595.8 L397.5 603.8 L400.1 604.2 L402.6 604.5 L404.9 604.9 L407.1 605.3 L409.1 605.7 L411.0 606.1 L412.7 606.5 L414.2 607.0 L415.6 607.4 L416.8 607.9 L417.8 608.3 L418.6 608.8 L419.2 609.2 L419.4 609.7 L425.2 615.3 Z" fill="url(#w4)"/><path d="M424.4 615.3 L418.6 609.7 L418.4 609.2 L417.8 608.8 L417.0 608.3 L416.0 607.9 L414.8 607.4 L413.4 607.0 L411.9 606.5 L410.2 606.1 L408.3 605.7 L406.3 605.3 L404.1 604.9 L401.8 604.5 L399.3 604.2 L396.7 603.8 L389.0 595.8 L393.6 593.7 L401.3 601.7 L404.6 602.2 L407.7 602.6 L410.7 603.1 L413.4 603.6 L416.0 604.1 L418.4 604.6 L420.6 605.2 L422.5 605.7 L424.3 606.3 L425.8 606.9 L427.1 607.5 L428.1 608.0 L428.8 608.6 L429.1 609.2 L434.9 614.7 Z" fill="url(#w6)"/><path d="M434.1 614.7 L428.3 609.2 L428.0 608.6 L427.3 608.0 L426.3 607.5 L425.0 606.9 L423.5 606.3 L421.7 605.7 L419.8 605.2 L417.6 604.6 L415.2 604.1 L412.6 603.6 L409.9 603.1 L406.9 602.6 L403.8 602.2 L400.5 601.7 L392.8 593.7 L397.9 591.2 L405.6 599.3 L409.6 599.8 L413.3 600.3 L416.8 600.9 L420.1 601.5 L423.1 602.1 L426.0 602.7 L428.6 603.3 L430.9 604.0 L433.0 604.7 L434.8 605.4 L436.3 606.1 L437.5 606.7 L438.4 607.4 L438.8 608.1 L444.6 613.7 Z" fill="url(#w8)"/><path d="M443.8 613.7 L438.0 608.1 L437.6 607.4 L436.7 606.7 L435.5 606.1 L434.0 605.4 L432.2 604.7 L430.1 604.0 L427.8 603.3 L425.2 602.7 L422.3 602.1 L419.3 601.5 L416.0 600.9 L412.5 600.3 L408.8 599.8 L404.8 599.3 L397.1 591.2 L403.0 588.3 L410.8 596.4 L415.2 597.0 L419.4 597.6 L423.4 598.2 L427.1 598.9 L430.6 599.6 L433.8 600.3 L436.8 601.0 L439.4 601.8 L441.8 602.6 L443.9 603.3 L445.6 604.1 L446.9 604.9 L447.9 605.7 L448.3 606.5 L454.1 612.0 Z" fill="url(#w10)"/><path d="M453.3 612.0 L447.5 606.5 L447.1 605.7 L446.1 604.9 L444.8 604.1 L443.1 603.3 L441.0 602.6 L438.6 601.8 L436.0 601.0 L433.0 600.3 L429.8 599.6 L426.3 598.9 L422.6 598.2 L418.6 597.6 L414.4 597.0 L410.0 596.4 L402.2 588.3 L409.2 585.3 L416.9 593.3 L421.7 593.9 L426.3 594.6 L430.6 595.3 L434.7 596.1 L438.5 596.8 L442.0 597.6 L445.2 598.4 L448.1 599.2 L450.7 600.0 L452.9 600.9 L454.8 601.7 L456.3 602.6 L457.3 603.4 L457.8 604.3 L463.6 609.8 Z" fill="url(#w12)"/><path d="M462.8 609.8 L457.0 604.3 L456.5 603.4 L455.5 602.6 L454.0 601.7 L452.1 600.9 L449.9 600.0 L447.3 599.2 L444.4 598.4 L441.2 597.6 L437.7 596.8 L433.9 596.1 L429.8 595.3 L425.5 594.6 L420.9 593.9 L416.1 593.3 L408.4 585.3 L415.9 581.8 L423.7 589.9 L428.8 590.6 L433.7 591.3 L438.3 592.0 L442.6 592.8 L446.6 593.6 L450.3 594.4 L453.7 595.3 L456.8 596.1 L459.5 597.0 L461.9 597.9 L463.9 598.8 L465.5 599.7 L466.6 600.6 L467.1 601.5 L472.9 607.1 Z" fill="url(#w14)"/><path d="M472.1 607.1 L466.3 601.5 L465.8 600.6 L464.7 599.7 L463.1 598.8 L461.1 597.9 L458.7 597.0 L456.0 596.1 L452.9 595.3 L449.5 594.4 L445.8 593.6 L441.8 592.8 L437.5 592.0 L432.9 591.3 L428.0 590.6 L422.9 589.9 L415.1 581.8 L423.3 577.8 L431.1 585.9 L436.4 586.6 L441.4 587.3 L446.2 588.1 L450.7 588.9 L454.8 589.7 L458.7 590.6 L462.2 591.4 L465.4 592.3 L468.3 593.3 L470.7 594.2 L472.8 595.1 L474.4 596.1 L475.6 597.0 L476.1 597.9 L481.9 603.5 Z" fill="url(#w16)"/><path d="M481.1 603.5 L475.3 597.9 L474.8 597.0 L473.6 596.1 L472.0 595.1 L469.9 594.2 L467.5 593.3 L464.6 592.3 L461.4 591.4 L457.9 590.6 L454.0 589.7 L449.9 588.9 L445.4 588.1 L440.6 587.3 L435.6 586.6 L430.3 585.9 L422.5 577.8 L430.0 574.1 L437.7 582.2 L443.3 582.9 L448.7 583.7 L453.7 584.5 L458.4 585.4 L462.8 586.3 L466.9 587.2 L470.6 588.1 L474.0 589.0 L477.0 590.0 L479.6 591.0 L481.8 592.0 L483.6 593.0 L484.8 593.9 L485.3 595.0 L491.1 600.5 Z" fill="url(#w18)"/><path d="M490.3 600.5 L484.5 595.0 L484.0 593.9 L482.8 593.0 L481.0 592.0 L478.8 591.0 L476.2 590.0 L473.2 589.0 L469.8 588.1 L466.1 587.2 L462.0 586.3 L457.6 585.4 L452.9 584.5 L447.9 583.7 L442.5 582.9 L436.9 582.2 L429.2 574.1 L436.4 569.9 L444.1 578.0 L450.0 578.8 L455.7 579.6 L461.0 580.5 L466.0 581.4 L470.6 582.3 L474.9 583.2 L478.9 584.2 L482.4 585.2 L485.6 586.3 L488.4 587.3 L490.7 588.3 L492.5 589.4 L493.8 590.4 L494.3 591.5 L500.1 597.0 Z" fill="url(#w20)"/><path d="M499.3 597.0 L493.5 591.5 L493.0 590.4 L491.7 589.4 L489.9 588.3 L487.6 587.3 L484.8 586.3 L481.6 585.2 L478.1 584.2 L474.1 583.2 L469.8 582.3 L465.2 581.4 L460.2 580.5 L454.9 579.6 L449.2 578.8 L443.3 578.0 L435.6 569.9 L443.3 565.3 L451.1 573.4 L457.2 574.2 L463.1 575.1 L468.6 576.0 L473.8 576.9 L478.6 577.8 L483.0 578.8 L487.1 579.8 L490.8 580.9 L494.1 581.9 L496.9 583.0 L499.3 584.1 L501.2 585.2 L502.5 586.2 L503.1 587.4 L508.9 592.9 Z" fill="url(#w22)"/><path d="M508.1 592.9 L502.3 587.4 L501.7 586.2 L500.4 585.2 L498.5 584.1 L496.1 583.0 L493.3 581.9 L490.0 580.9 L486.3 579.8 L482.2 578.8 L477.8 577.8 L473.0 576.9 L467.8 576.0 L462.3 575.1 L456.4 574.2 L450.3 573.4 L442.5 565.3 L449.8 560.9 L457.5 569.0 L463.9 569.8 L470.1 570.7 L475.8 571.6 L481.3 572.6 L486.3 573.6 L491.0 574.6 L495.3 575.7 L499.1 576.8 L502.6 577.9 L505.6 579.0 L508.1 580.2 L510.1 581.3 L511.4 582.4 L512.1 583.6 L517.9 589.1 Z" fill="url(#w24)"/><path d="M517.1 589.1 L511.3 583.6 L510.6 582.4 L509.3 581.3 L507.3 580.2 L504.8 579.0 L501.8 577.9 L498.3 576.8 L494.5 575.7 L490.2 574.6 L485.5 573.6 L480.5 572.6 L475.0 571.6 L469.3 570.7 L463.1 569.8 L456.7 569.0 L449.0 560.9 L455.8 556.7 L463.5 564.7 L470.3 565.6 L476.8 566.6 L482.9 567.6 L488.6 568.6 L493.9 569.6 L498.8 570.7 L503.4 571.9 L507.4 573.0 L511.1 574.2 L514.2 575.4 L516.9 576.6 L519.0 577.8 L520.4 578.9 L521.1 580.2 L526.9 585.7 Z" fill="url(#w26)"/><path d="M526.1 585.7 L520.3 580.2 L519.6 578.9 L518.2 577.8 L516.1 576.6 L513.4 575.4 L510.3 574.2 L506.6 573.0 L502.6 571.9 L498.0 570.7 L493.1 569.6 L487.8 568.6 L482.1 567.6 L476.0 566.6 L469.5 565.6 L462.7 564.7 L455.0 556.7 L463.3 551.1 L471.0 559.2 L477.9 560.1 L484.4 561.0 L490.6 562.1 L496.3 563.1 L501.7 564.2 L506.7 565.3 L511.3 566.4 L515.4 567.5 L519.0 568.7 L522.2 569.9 L524.9 571.2 L527.0 572.4 L528.5 573.5 L529.1 574.8 L534.9 580.3 Z" fill="url(#w28)"/><path d="M534.1 580.3 L528.3 574.8 L527.7 573.5 L526.2 572.4 L524.1 571.2 L521.4 569.9 L518.2 568.7 L514.6 567.5 L510.5 566.4 L505.9 565.3 L500.9 564.2 L495.5 563.1 L489.8 562.1 L483.6 561.0 L477.1 560.1 L470.2 559.2 L462.5 551.1 L469.5 546.5 L477.2 554.6 L484.4 555.5 L491.2 556.5 L497.6 557.6 L503.7 558.7 L509.3 559.8 L514.5 560.9 L519.2 562.1 L523.5 563.3 L527.4 564.6 L530.7 565.8 L533.5 567.1 L535.7 568.3 L537.2 569.6 L537.9 570.9 L543.7 576.4 Z" fill="url(#w30)"/><path d="M542.9 576.4 L537.1 570.9 L536.4 569.6 L534.9 568.3 L532.7 567.1 L529.9 565.8 L526.6 564.6 L522.7 563.3 L518.4 562.1 L513.7 560.9 L508.5 559.8 L502.9 558.7 L496.8 557.6 L490.4 556.5 L483.6 555.5 L476.4 554.6 L468.7 546.5 L474.2 543.0 L482.0 551.1 L489.7 552.1 L497.0 553.2 L504.0 554.3 L510.5 555.5 L516.5 556.7 L522.1 557.9 L527.2 559.2 L531.9 560.5 L536.0 561.8 L539.6 563.2 L542.6 564.6 L545.0 565.9 L546.6 567.2 L547.4 568.6 L553.2 574.2 Z" fill="url(#w32)"/><path d="M552.4 574.2 L546.6 568.6 L545.8 567.2 L544.2 565.9 L541.8 564.6 L538.8 563.2 L535.2 561.8 L531.1 560.5 L526.4 559.2 L521.3 557.9 L515.7 556.7 L509.7 555.5 L503.2 554.3 L496.2 553.2 L488.9 552.1 L481.2 551.1 L473.4 543.0 L482.3 537.2 L490.0 545.3 L497.7 546.3 L505.0 547.4 L511.9 548.5 L518.3 549.7 L524.3 550.8 L529.9 552.1 L535.0 553.3 L539.6 554.6 L543.7 556.0 L547.2 557.3 L550.2 558.7 L552.6 560.0 L554.2 561.3 L555.0 562.7 L560.8 568.3 Z" fill="url(#w34)"/><path d="M560.0 568.3 L554.2 562.7 L553.4 561.3 L551.8 560.0 L549.4 558.7 L546.4 557.3 L542.9 556.0 L538.8 554.6 L534.2 553.3 L529.1 552.1 L523.5 550.8 L517.5 549.7 L511.1 548.5 L504.2 547.4 L496.9 546.3 L489.2 545.3 L481.5 537.2 L488.1 533.0 L495.8 541.1 L503.9 542.1 L511.6 543.2 L518.8 544.4 L525.5 545.6 L531.9 546.9 L537.7 548.2 L543.0 549.5 L547.9 550.9 L552.2 552.3 L555.9 553.7 L559.1 555.1 L561.5 556.5 L563.3 557.9 L564.0 559.4 L569.8 564.9 Z" fill="url(#w36)"/><path d="M569.0 564.9 L563.2 559.4 L562.5 557.9 L560.7 556.5 L558.3 555.1 L555.1 553.7 L551.4 552.3 L547.1 550.9 L542.2 549.5 L536.9 548.2 L531.1 546.9 L524.7 545.6 L518.0 544.4 L510.8 543.2 L503.1 542.1 L495.0 541.1 L487.3 533.0 L494.1 528.6 L501.8 536.7 L510.3 537.8 L518.2 538.9 L525.8 540.2 L532.8 541.4 L539.4 542.7 L545.5 544.1 L551.1 545.5 L556.2 546.9 L560.7 548.4 L564.6 549.8 L567.9 551.3 L570.4 552.8 L572.2 554.2 L573.1 555.8 L578.8 561.3 Z" fill="url(#w38)"/><path d="M578.0 561.3 L572.3 555.8 L571.4 554.2 L569.6 552.8 L567.1 551.3 L563.8 549.8 L559.9 548.4 L555.4 546.9 L550.3 545.5 L544.7 544.1 L538.6 542.7 L532.0 541.4 L525.0 540.2 L517.4 538.9 L509.5 537.8 L501.0 536.7 L493.3 528.6 L501.4 523.4 L509.1 531.4 L517.7 532.5 L525.8 533.7 L533.4 535.0 L540.6 536.3 L547.3 537.6 L553.5 539.0 L559.1 540.4 L564.3 541.8 L568.8 543.3 L572.8 544.8 L576.1 546.3 L578.7 547.8 L580.6 549.2 L581.4 550.8 L587.2 556.4 Z" fill="url(#w40)"/><path d="M586.4 556.4 L580.6 550.8 L579.8 549.2 L577.9 547.8 L575.3 546.3 L572.0 544.8 L568.0 543.3 L563.5 541.8 L558.3 540.4 L552.7 539.0 L546.5 537.6 L539.8 536.3 L532.6 535.0 L525.0 533.7 L516.9 532.5 L508.3 531.4 L500.6 523.4 L508.1 518.7 L515.9 526.7 L524.6 527.9 L533.0 529.1 L540.8 530.4 L548.2 531.7 L555.0 533.0 L561.4 534.4 L567.2 535.9 L572.5 537.4 L577.2 538.9 L581.2 540.4 L584.6 542.0 L587.3 543.5 L589.2 545.0 L590.0 546.6 L595.8 552.2 Z" fill="url(#w42)"/><path d="M595.0 552.2 L589.2 546.6 L588.4 545.0 L586.5 543.5 L583.8 542.0 L580.4 540.4 L576.4 538.9 L571.7 537.4 L566.4 535.9 L560.6 534.4 L554.2 533.0 L547.4 531.7 L540.0 530.4 L532.2 529.1 L523.8 527.9 L515.1 526.7 L507.3 518.7 L514.9 513.9 L522.6 522.0 L531.6 523.1 L540.2 524.4 L548.2 525.7 L555.8 527.1 L562.8 528.5 L569.3 529.9 L575.3 531.4 L580.7 532.9 L585.5 534.5 L589.6 536.0 L593.1 537.6 L595.9 539.2 L597.8 540.7 L598.7 542.4 L604.5 547.9 Z" fill="url(#w44)"/><path d="M603.7 547.9 L597.9 542.4 L597.0 540.7 L595.1 539.2 L592.3 537.6 L588.8 536.0 L584.7 534.5 L579.9 532.9 L574.5 531.4 L568.5 529.9 L562.0 528.5 L555.0 527.1 L547.4 525.7 L539.4 524.4 L530.8 523.1 L521.8 522.0 L514.1 513.9 L522.9 508.3 L530.7 516.3 L539.7 517.5 L548.2 518.7 L556.2 520.0 L563.7 521.4 L570.7 522.8 L577.2 524.2 L583.2 525.7 L588.5 527.2 L593.3 528.8 L597.5 530.3 L601.0 531.9 L603.7 533.5 L605.6 535.0 L606.5 536.7 L612.3 542.2 Z" fill="url(#w46)"/><path d="M611.5 542.2 L605.7 536.7 L604.8 535.0 L602.9 533.5 L600.2 531.9 L596.7 530.3 L592.5 528.8 L587.7 527.2 L582.4 525.7 L576.4 524.2 L569.9 522.8 L562.9 521.4 L555.4 520.0 L547.4 518.7 L538.9 517.5 L529.9 516.3 L522.1 508.3 L529.6 503.8 L537.3 511.9 L546.5 513.0 L555.3 514.3 L563.5 515.7 L571.3 517.1 L578.5 518.5 L585.2 520.0 L591.3 521.5 L596.9 523.1 L601.8 524.7 L606.1 526.3 L609.7 527.9 L612.5 529.5 L614.5 531.1 L615.3 532.8 L621.1 538.3 Z" fill="url(#w48)"/><path d="M620.3 538.3 L614.5 532.8 L613.7 531.1 L611.7 529.5 L608.9 527.9 L605.3 526.3 L601.0 524.7 L596.1 523.1 L590.5 521.5 L584.4 520.0 L577.7 518.5 L570.5 517.1 L562.7 515.7 L554.5 514.3 L545.7 513.0 L536.5 511.9 L528.8 503.8 L535.8 499.6 L543.6 507.6 L553.1 508.9 L562.2 510.2 L570.7 511.6 L578.8 513.0 L586.3 514.5 L593.2 516.0 L599.5 517.6 L605.3 519.2 L610.4 520.9 L614.8 522.6 L618.5 524.3 L621.4 525.9 L623.5 527.6 L624.4 529.3 L630.2 534.9 Z" fill="url(#w50)"/><path d="M629.4 534.9 L623.6 529.3 L622.7 527.6 L620.6 525.9 L617.7 524.3 L614.0 522.6 L609.6 520.9 L604.5 519.2 L598.7 517.6 L592.4 516.0 L585.5 514.5 L578.0 513.0 L569.9 511.6 L561.4 510.2 L552.3 508.9 L542.8 507.6 L535.0 499.6 L544.8 493.6 L552.5 501.7 L561.8 502.9 L570.7 504.2 L579.0 505.5 L586.9 506.9 L594.2 508.4 L600.9 509.9 L607.1 511.4 L612.7 513.0 L617.7 514.6 L622.0 516.3 L625.7 517.9 L628.5 519.5 L630.5 521.1 L631.4 522.8 L637.2 528.4 Z" fill="url(#w52)"/><path d="M636.4 528.4 L630.6 522.8 L629.7 521.1 L627.7 519.5 L624.9 517.9 L621.2 516.3 L616.9 514.6 L611.9 513.0 L606.3 511.4 L600.1 509.9 L593.4 508.4 L586.1 506.9 L578.2 505.5 L569.9 504.2 L561.0 502.9 L551.7 501.7 L544.0 493.6 L553.0 488.3 L560.7 496.4 L570.0 497.6 L578.9 498.9 L587.2 500.2 L595.0 501.6 L602.3 503.1 L609.1 504.6 L615.3 506.1 L620.9 507.7 L625.8 509.3 L630.2 510.9 L633.8 512.6 L636.6 514.2 L638.6 515.8 L639.5 517.5 L645.3 523.1 Z" fill="url(#w54)"/><path d="M644.5 523.1 L638.7 517.5 L637.8 515.8 L635.8 514.2 L633.0 512.6 L629.4 510.9 L625.0 509.3 L620.1 507.7 L614.5 506.1 L608.3 504.6 L601.5 503.1 L594.2 501.6 L586.4 500.2 L578.1 498.9 L569.2 497.6 L559.9 496.4 L552.2 488.3 L561.1 483.4 L568.9 491.4 L578.2 492.6 L587.1 493.9 L595.5 495.3 L603.3 496.7 L610.6 498.2 L617.4 499.7 L623.6 501.2 L629.2 502.8 L634.2 504.4 L638.5 506.0 L642.2 507.7 L645.0 509.3 L647.0 510.9 L647.9 512.6 L653.7 518.2 Z" fill="url(#w56)"/><path d="M652.9 518.2 L647.1 512.6 L646.2 510.9 L644.2 509.3 L641.4 507.7 L637.7 506.0 L633.4 504.4 L628.4 502.8 L622.8 501.2 L616.6 499.7 L609.8 498.2 L602.5 496.7 L594.7 495.3 L586.3 493.9 L577.4 492.6 L568.1 491.4 L560.3 483.4 L569.5 478.6 L577.2 486.7 L586.6 487.9 L595.5 489.2 L603.9 490.6 L611.7 492.0 L619.0 493.4 L625.8 494.9 L632.0 496.5 L637.6 498.1 L642.6 499.7 L647.0 501.3 L650.6 503.0 L653.5 504.6 L655.5 506.2 L656.4 507.9 L662.2 513.5 Z" fill="url(#w58)"/><path d="M661.4 513.5 L655.6 507.9 L654.7 506.2 L652.7 504.6 L649.8 503.0 L646.2 501.3 L641.8 499.7 L636.8 498.1 L631.2 496.5 L625.0 494.9 L618.2 493.4 L610.9 492.0 L603.1 490.6 L594.7 489.2 L585.8 487.9 L576.4 486.7 L568.7 478.6 L577.6 474.2 L585.3 482.3 L594.7 483.5 L603.7 484.8 L612.1 486.2 L620.1 487.6 L627.5 489.1 L634.3 490.6 L640.6 492.1 L646.2 493.7 L651.3 495.4 L655.6 497.0 L659.3 498.7 L662.2 500.3 L664.2 501.9 L665.1 503.7 L670.9 509.2 Z" fill="url(#w60)"/><path d="M670.1 509.2 L664.3 503.7 L663.4 501.9 L661.4 500.3 L658.5 498.7 L654.8 497.0 L650.5 495.4 L645.4 493.7 L639.8 492.1 L633.5 490.6 L626.7 489.1 L619.3 487.6 L611.3 486.2 L602.9 484.8 L593.9 483.5 L584.5 482.3 L576.8 474.2 L587.5 469.2 L595.3 477.3 L604.4 478.4 L613.0 479.7 L621.2 481.0 L628.9 482.4 L636.0 483.8 L642.6 485.3 L648.6 486.8 L654.1 488.3 L659.0 489.9 L663.2 491.5 L666.7 493.1 L669.5 494.7 L671.5 496.3 L672.4 497.9 L678.2 503.5 Z" fill="url(#w62)"/><path d="M677.4 503.5 L671.6 497.9 L670.7 496.3 L668.7 494.7 L665.9 493.1 L662.4 491.5 L658.2 489.9 L653.3 488.3 L647.8 486.8 L641.8 485.3 L635.2 483.8 L628.1 482.4 L620.4 481.0 L612.2 479.7 L603.6 478.4 L594.5 477.3 L586.7 469.2 L596.4 464.9 L604.1 473.0 L613.2 474.1 L621.8 475.4 L629.9 476.7 L637.5 478.1 L644.6 479.5 L651.1 480.9 L657.1 482.4 L662.6 484.0 L667.4 485.5 L671.6 487.1 L675.1 488.7 L677.9 490.3 L679.8 491.8 L680.7 493.5 L686.5 499.1 Z" fill="url(#w64)"/><path d="M685.7 499.1 L679.9 493.5 L679.0 491.8 L677.1 490.3 L674.3 488.7 L670.8 487.1 L666.6 485.5 L661.8 484.0 L656.3 482.4 L650.3 480.9 L643.8 479.5 L636.7 478.1 L629.1 476.7 L621.0 475.4 L612.4 474.1 L603.3 473.0 L595.6 464.9 L606.1 460.3 L613.8 468.4 L622.7 469.5 L631.1 470.8 L639.0 472.1 L646.4 473.4 L653.4 474.8 L659.8 476.2 L665.6 477.6 L671.0 479.1 L675.7 480.7 L679.8 482.2 L683.2 483.8 L685.9 485.3 L687.8 486.8 L688.7 488.5 L694.5 494.0 Z" fill="url(#w66)"/><path d="M693.7 494.0 L687.9 488.5 L687.0 486.8 L685.1 485.3 L682.4 483.8 L679.0 482.2 L674.9 480.7 L670.2 479.1 L664.8 477.6 L659.0 476.2 L652.6 474.8 L645.6 473.4 L638.2 472.1 L630.3 470.8 L621.9 469.5 L613.0 468.4 L605.3 460.3 L616.6 455.2 L624.4 463.3 L632.8 464.4 L640.8 465.6 L648.3 466.8 L655.4 468.1 L661.9 469.4 L668.0 470.7 L673.6 472.1 L678.7 473.5 L683.1 475.0 L687.0 476.5 L690.3 477.9 L692.9 479.4 L694.7 480.9 L695.5 482.4 L701.3 488.0 Z" fill="url(#w68)"/><path d="M700.5 488.0 L694.7 482.4 L693.9 480.9 L692.1 479.4 L689.5 477.9 L686.2 476.5 L682.3 475.0 L677.9 473.5 L672.8 472.1 L667.2 470.7 L661.1 469.4 L654.6 468.1 L647.5 466.8 L640.0 465.6 L632.0 464.4 L623.6 463.3 L615.8 455.2 L627.7 450.4 L635.4 458.4 L643.4 459.4 L650.9 460.6 L658.1 461.7 L664.8 462.9 L671.0 464.2 L676.7 465.4 L682.0 466.7 L686.8 468.1 L691.0 469.5 L694.7 470.9 L697.8 472.3 L700.3 473.6 L702.0 475.0 L702.7 476.5 L708.5 482.0 Z" fill="url(#w70)"/><path d="M707.7 482.0 L701.9 476.5 L701.2 475.0 L699.5 473.6 L697.0 472.3 L693.9 470.9 L690.2 469.5 L686.0 468.1 L681.2 466.7 L675.9 465.4 L670.2 464.2 L664.0 462.9 L657.3 461.7 L650.1 460.6 L642.6 459.4 L634.6 458.4 L626.9 450.4 L638.4 446.1 L646.1 454.1 L653.8 455.1 L661.0 456.2 L667.8 457.3 L674.2 458.4 L680.2 459.6 L685.7 460.8 L690.8 462.1 L695.4 463.4 L699.5 464.7 L703.0 466.1 L706.0 467.4 L708.3 468.7 L710.0 470.0 L710.7 471.4 L716.5 477.0 Z" fill="url(#w72)"/><path d="M715.7 477.0 L709.9 471.4 L709.2 470.0 L707.5 468.7 L705.2 467.4 L702.2 466.1 L698.7 464.7 L694.6 463.4 L690.0 462.1 L684.9 460.8 L679.4 459.6 L673.4 458.4 L667.0 457.3 L660.2 456.2 L653.0 455.1 L645.3 454.1 L637.6 446.1 L650.2 441.1 L658.0 449.1 L665.0 450.0 L671.6 451.0 L677.9 452.0 L683.7 453.1 L689.2 454.2 L694.3 455.3 L698.9 456.4 L703.1 457.6 L706.8 458.8 L710.1 460.1 L712.8 461.3 L714.9 462.5 L716.4 463.7 L717.1 465.0 L722.9 470.6 Z" fill="url(#w74)"/><path d="M722.1 470.6 L716.3 465.0 L715.6 463.7 L714.1 462.5 L712.0 461.3 L709.3 460.1 L706.0 458.8 L702.3 457.6 L698.1 456.4 L693.5 455.3 L688.4 454.2 L682.9 453.1 L677.1 452.0 L670.8 451.0 L664.2 450.0 L657.2 449.1 L649.4 441.1 L662.9 435.3 L670.6 443.4 L676.7 444.2 L682.4 445.0 L687.8 445.9 L692.9 446.8 L697.7 447.8 L702.0 448.7 L706.1 449.7 L709.7 450.8 L712.9 451.8 L715.7 452.9 L718.1 453.9 L719.9 455.0 L721.2 456.0 L721.8 457.1 L727.6 462.7 Z" fill="url(#w76)"/><path d="M726.8 462.7 L721.0 457.1 L720.4 456.0 L719.1 455.0 L717.3 453.9 L714.9 452.9 L712.1 451.8 L708.9 450.8 L705.3 449.7 L701.2 448.7 L696.9 447.8 L692.1 446.8 L687.0 445.9 L681.6 445.0 L675.9 444.2 L669.8 443.4 L662.1 435.3 L673.2 429.2 L680.9 437.3 L686.2 438.0 L691.1 438.7 L695.8 439.5 L700.2 440.3 L704.3 441.1 L708.0 441.9 L711.5 442.8 L714.6 443.6 L717.4 444.6 L719.8 445.5 L721.9 446.4 L723.5 447.3 L724.6 448.2 L725.1 449.1 L730.9 454.7 Z" fill="url(#w78)"/><path d="M730.1 454.7 L724.3 449.1 L723.8 448.2 L722.7 447.3 L721.1 446.4 L719.0 445.5 L716.6 444.6 L713.8 443.6 L710.7 442.8 L707.2 441.9 L703.5 441.1 L699.4 440.3 L695.0 439.5 L690.3 438.7 L685.4 438.0 L680.1 437.3 L672.4 429.2 L677.2 424.4 L685.0 432.5 L689.0 433.0 L692.9 433.6 L696.6 434.2 L700.0 434.8 L703.2 435.5 L706.2 436.1 L708.9 436.8 L711.4 437.5 L713.6 438.2 L715.5 438.9 L717.1 439.6 L718.3 440.3 L719.2 441.0 L719.6 441.8 L725.4 447.4 Z" fill="url(#w80)"/><path d="M724.6 447.4 L718.8 441.8 L718.4 441.0 L717.5 440.3 L716.3 439.6 L714.7 438.9 L712.8 438.2 L710.6 437.5 L708.1 436.8 L705.4 436.1 L702.4 435.5 L699.2 434.8 L695.8 434.2 L692.1 433.6 L688.2 433.0 L684.2 432.5 L676.4 424.4 L680.1 421.7 L687.9 429.7 L690.7 430.1 L693.4 430.5 L695.9 430.9 L698.2 431.3 L700.5 431.8 L702.5 432.2 L704.4 432.7 L706.1 433.2 L707.6 433.7 L708.9 434.2 L710.0 434.7 L710.8 435.1 L711.4 435.6 L711.7 436.1 L717.5 441.7 Z" fill="url(#w82)"/><path d="M716.7 441.7 L710.9 436.1 L710.6 435.6 L710.0 435.1 L709.2 434.7 L708.1 434.2 L706.8 433.7 L705.3 433.2 L703.6 432.7 L701.7 432.2 L699.7 431.8 L697.4 431.3 L695.1 430.9 L692.6 430.5 L689.9 430.1 L687.1 429.7 L679.3 421.7 L682.1 420.4 L689.8 428.5 L691.4 428.7 L692.9 428.9 L694.3 429.1 L695.6 429.3 L696.8 429.6 L697.9 429.8 L698.9 430.1 L699.9 430.3 L700.7 430.6 L701.4 430.9 L702.0 431.2 L702.5 431.4 L702.8 431.7 L703.0 432.0 L708.8 437.5 Z" fill="url(#w84)"/><path d="M708.0 437.5 L702.2 432.0 L702.0 431.7 L701.7 431.4 L701.2 431.2 L700.6 430.9 L699.9 430.6 L699.1 430.3 L698.1 430.1 L697.1 429.8 L696.0 429.6 L694.8 429.3 L693.5 429.1 L692.1 428.9 L690.6 428.7 L689.0 428.5 L681.3 420.4 L683.9 420.2 L691.6 428.3 L692.4 428.4 L693.2 428.5 L693.9 428.6 L694.6 428.7 L695.3 428.8 L695.8 429.0 L696.4 429.1 L696.9 429.2 L697.3 429.4 L697.7 429.5 L698.0 429.7 L698.2 429.8 L698.4 430.0 L698.5 430.1 L704.3 435.7 Z" fill="url(#w86)"/><g fill="none" stroke="#1c2e29" stroke-opacity="0.38" stroke-width="0.7"><path d="M389.8 608.4 L389.8 608.4 L389.8 608.4 L389.7 608.4 L389.7 608.3 L389.6 608.3 L389.6 608.3 L389.5 608.3 L389.4 608.3 L389.4 608.2 L389.3 608.2 L389.2 608.2 L389.1 608.2 L389.0 608.2 L388.8 608.2"/><path d="M394.6 607.8 L394.6 607.8 L394.5 607.7 L394.4 607.6 L394.2 607.5 L394.0 607.5 L393.8 607.4 L393.6 607.3 L393.3 607.3 L393.0 607.2 L392.7 607.1 L392.3 607.1 L392.0 607.0 L391.6 606.9 L391.2 606.9"/><path d="M399.4 607.4 L399.4 607.3 L399.2 607.1 L399.0 607.0 L398.7 606.9 L398.4 606.8 L398.0 606.6 L397.5 606.5 L397.1 606.4 L396.5 606.3 L396.0 606.2 L395.3 606.0 L394.7 605.9 L394.0 605.8 L393.3 605.7"/><path d="M404.2 608.4 L404.1 608.2 L403.8 608.0 L403.4 607.7 L402.9 607.5 L402.3 607.3 L401.7 607.1 L400.9 606.9 L400.1 606.7 L399.2 606.5 L398.2 606.3 L397.1 606.1 L396.0 605.9 L394.8 605.7 L393.6 605.6"/><path d="M408.9 609.4 L408.8 609.1 L408.4 608.8 L407.8 608.5 L407.1 608.2 L406.3 607.8 L405.4 607.5 L404.3 607.2 L403.1 606.9 L401.8 606.7 L400.5 606.4 L399.0 606.1 L397.4 605.9 L395.7 605.6 L393.9 605.4"/><path d="M413.8 609.6 L413.6 609.2 L413.1 608.8 L412.4 608.5 L411.6 608.1 L410.6 607.7 L409.4 607.3 L408.1 606.9 L406.6 606.6 L405.0 606.2 L403.3 605.9 L401.5 605.6 L399.5 605.2 L397.4 604.9 L395.3 604.7"/><path d="M418.6 609.7 L418.4 609.2 L417.8 608.8 L417.0 608.3 L416.0 607.9 L414.8 607.4 L413.4 607.0 L411.9 606.5 L410.2 606.1 L408.3 605.7 L406.3 605.3 L404.1 604.9 L401.8 604.5 L399.3 604.2 L396.7 603.8"/><path d="M423.5 609.6 L423.2 609.1 L422.6 608.6 L421.7 608.0 L420.5 607.5 L419.1 607.0 L417.5 606.5 L415.8 606.0 L413.8 605.5 L411.7 605.0 L409.4 604.6 L406.9 604.1 L404.2 603.7 L401.4 603.3 L398.4 602.9"/><path d="M428.3 609.2 L428.0 608.6 L427.3 608.0 L426.3 607.5 L425.0 606.9 L423.5 606.3 L421.7 605.7 L419.8 605.2 L417.6 604.6 L415.2 604.1 L412.6 603.6 L409.9 603.1 L406.9 602.6 L403.8 602.2 L400.5 601.7"/><path d="M433.1 608.7 L432.8 608.1 L432.0 607.4 L430.9 606.8 L429.5 606.2 L427.8 605.5 L425.9 604.9 L423.7 604.3 L421.3 603.7 L418.7 603.1 L415.9 602.6 L412.9 602.0 L409.7 601.5 L406.2 601.0 L402.6 600.5"/><path d="M438.0 608.1 L437.6 607.4 L436.7 606.7 L435.5 606.1 L434.0 605.4 L432.2 604.7 L430.1 604.0 L427.8 603.3 L425.2 602.7 L422.3 602.1 L419.3 601.5 L416.0 600.9 L412.5 600.3 L408.8 599.8 L404.8 599.3"/><path d="M442.7 607.4 L442.3 606.6 L441.4 605.9 L440.2 605.2 L438.5 604.4 L436.6 603.7 L434.3 603.0 L431.8 602.2 L429.1 601.6 L426.0 600.9 L422.7 600.2 L419.2 599.6 L415.5 599.0 L411.5 598.4 L407.3 597.9"/><path d="M447.5 606.5 L447.1 605.7 L446.1 604.9 L444.8 604.1 L443.1 603.3 L441.0 602.6 L438.6 601.8 L436.0 601.0 L433.0 600.3 L429.8 599.6 L426.3 598.9 L422.6 598.2 L418.6 597.6 L414.4 597.0 L410.0 596.4"/><path d="M452.3 605.4 L451.8 604.6 L450.8 603.8 L449.4 603.0 L447.6 602.2 L445.4 601.4 L442.9 600.5 L440.2 599.8 L437.1 599.0 L433.7 598.3 L430.1 597.5 L426.2 596.8 L422.0 596.2 L417.6 595.5 L413.0 594.9"/><path d="M457.0 604.3 L456.5 603.4 L455.5 602.6 L454.0 601.7 L452.1 600.9 L449.9 600.0 L447.3 599.2 L444.4 598.4 L441.2 597.6 L437.7 596.8 L433.9 596.1 L429.8 595.3 L425.5 594.6 L420.9 593.9 L416.1 593.3"/><path d="M461.7 603.1 L461.2 602.1 L460.1 601.3 L458.6 600.4 L456.6 599.5 L454.3 598.6 L451.6 597.8 L448.6 596.9 L445.3 596.1 L441.7 595.3 L437.8 594.5 L433.6 593.8 L429.1 593.0 L424.3 592.3 L419.3 591.7"/><path d="M466.3 601.5 L465.8 600.6 L464.7 599.7 L463.1 598.8 L461.1 597.9 L458.7 597.0 L456.0 596.1 L452.9 595.3 L449.5 594.4 L445.8 593.6 L441.8 592.8 L437.5 592.0 L432.9 591.3 L428.0 590.6 L422.9 589.9"/><path d="M470.8 599.8 L470.3 598.8 L469.2 597.9 L467.6 597.0 L465.5 596.1 L463.1 595.2 L460.3 594.3 L457.2 593.4 L453.7 592.5 L449.9 591.7 L445.8 590.9 L441.4 590.1 L436.7 589.3 L431.8 588.6 L426.5 587.9"/><path d="M475.3 597.9 L474.8 597.0 L473.6 596.1 L472.0 595.1 L469.9 594.2 L467.5 593.3 L464.6 592.3 L461.4 591.4 L457.9 590.6 L454.0 589.7 L449.9 588.9 L445.4 588.1 L440.6 587.3 L435.6 586.6 L430.3 585.9"/><path d="M479.8 596.3 L479.3 595.3 L478.2 594.4 L476.5 593.5 L474.4 592.5 L471.8 591.5 L468.9 590.6 L465.7 589.7 L462.0 588.8 L458.1 587.9 L453.8 587.1 L449.3 586.2 L444.4 585.4 L439.2 584.7 L433.8 584.0"/><path d="M484.5 595.0 L484.0 593.9 L482.8 593.0 L481.0 592.0 L478.8 591.0 L476.2 590.0 L473.2 589.0 L469.8 588.1 L466.1 587.2 L462.0 586.3 L457.6 585.4 L452.9 584.5 L447.9 583.7 L442.5 582.9 L436.9 582.2"/><path d="M489.1 593.3 L488.5 592.2 L487.3 591.3 L485.5 590.2 L483.2 589.2 L480.5 588.2 L477.4 587.2 L474.0 586.2 L470.1 585.3 L465.9 584.3 L461.4 583.4 L456.5 582.6 L451.3 581.7 L445.8 580.9 L440.0 580.2"/><path d="M493.5 591.5 L493.0 590.4 L491.7 589.4 L489.9 588.3 L487.6 587.3 L484.8 586.3 L481.6 585.2 L478.1 584.2 L474.1 583.2 L469.8 582.3 L465.2 581.4 L460.2 580.5 L454.9 579.6 L449.2 578.8 L443.3 578.0"/><path d="M498.0 589.5 L497.4 588.4 L496.1 587.4 L494.2 586.3 L491.9 585.2 L489.1 584.2 L485.8 583.1 L482.2 582.1 L478.2 581.1 L473.8 580.1 L469.0 579.2 L464.0 578.3 L458.5 577.4 L452.8 576.5 L446.7 575.8"/><path d="M502.3 587.4 L501.7 586.2 L500.4 585.2 L498.5 584.1 L496.1 583.0 L493.3 581.9 L490.0 580.9 L486.3 579.8 L482.2 578.8 L477.8 577.8 L473.0 576.9 L467.8 576.0 L462.3 575.1 L456.4 574.2 L450.3 573.4"/><path d="M506.7 585.4 L506.1 584.2 L504.8 583.1 L502.9 582.0 L500.4 580.9 L497.5 579.8 L494.2 578.7 L490.4 577.7 L486.2 576.6 L481.7 575.6 L476.7 574.7 L471.5 573.7 L465.8 572.8 L459.9 571.9 L453.6 571.1"/><path d="M511.3 583.6 L510.6 582.4 L509.3 581.3 L507.3 580.2 L504.8 579.0 L501.8 577.9 L498.3 576.8 L494.5 575.7 L490.2 574.6 L485.5 573.6 L480.5 572.6 L475.0 571.6 L469.3 570.7 L463.1 569.8 L456.7 569.0"/><path d="M515.9 582.1 L515.2 580.9 L513.8 579.7 L511.8 578.6 L509.2 577.4 L506.1 576.2 L502.5 575.1 L498.5 573.9 L494.1 572.9 L489.3 571.8 L484.1 570.8 L478.5 569.7 L472.5 568.8 L466.2 567.8 L459.5 567.0"/><path d="M520.3 580.2 L519.6 578.9 L518.2 577.8 L516.1 576.6 L513.4 575.4 L510.3 574.2 L506.6 573.0 L502.6 571.9 L498.0 570.7 L493.1 569.6 L487.8 568.6 L482.1 567.6 L476.0 566.6 L469.5 565.6 L462.7 564.7"/><path d="M524.3 577.4 L523.6 576.2 L522.1 575.0 L520.1 573.8 L517.4 572.6 L514.2 571.4 L510.6 570.2 L506.5 569.1 L502.0 567.9 L497.0 566.8 L491.7 565.8 L486.0 564.8 L479.9 563.8 L473.4 562.8 L466.6 561.9"/><path d="M528.3 574.8 L527.7 573.5 L526.2 572.4 L524.1 571.2 L521.4 569.9 L518.2 568.7 L514.6 567.5 L510.5 566.4 L505.9 565.3 L500.9 564.2 L495.5 563.1 L489.8 562.1 L483.6 561.0 L477.1 560.1 L470.2 559.2"/><path d="M532.5 572.3 L531.8 571.0 L530.3 569.8 L528.2 568.6 L525.5 567.4 L522.3 566.2 L518.6 565.0 L514.4 563.8 L509.8 562.6 L504.8 561.5 L499.4 560.5 L493.5 559.4 L487.3 558.4 L480.7 557.4 L473.8 556.5"/><path d="M537.1 570.9 L536.4 569.6 L534.9 568.3 L532.7 567.1 L529.9 565.8 L526.6 564.6 L522.7 563.3 L518.4 562.1 L513.7 560.9 L508.5 559.8 L502.9 558.7 L496.8 557.6 L490.4 556.5 L483.6 555.5 L476.4 554.6"/><path d="M541.8 569.7 L541.1 568.3 L539.5 567.1 L537.2 565.8 L534.3 564.4 L530.9 563.1 L526.9 561.8 L522.4 560.6 L517.5 559.4 L512.1 558.2 L506.3 557.0 L500.0 555.9 L493.4 554.8 L486.3 553.8 L478.8 552.8"/><path d="M546.6 568.6 L545.8 567.2 L544.2 565.9 L541.8 564.6 L538.8 563.2 L535.2 561.8 L531.1 560.5 L526.4 559.2 L521.3 557.9 L515.7 556.7 L509.7 555.5 L503.2 554.3 L496.2 553.2 L488.9 552.1 L481.2 551.1"/><path d="M550.2 565.4 L549.5 564.0 L547.8 562.7 L545.5 561.4 L542.5 560.0 L538.9 558.7 L534.8 557.3 L530.2 556.1 L525.2 554.8 L519.6 553.6 L513.6 552.4 L507.2 551.2 L500.3 550.1 L493.1 549.0 L485.4 548.1"/><path d="M554.2 562.7 L553.4 561.3 L551.8 560.0 L549.4 558.7 L546.4 557.3 L542.9 556.0 L538.8 554.6 L534.2 553.3 L529.1 552.1 L523.5 550.8 L517.5 549.7 L511.1 548.5 L504.2 547.4 L496.9 546.3 L489.2 545.3"/><path d="M558.6 560.8 L557.8 559.3 L556.2 558.0 L553.8 556.6 L550.7 555.2 L547.1 553.9 L542.9 552.5 L538.2 551.2 L533.0 549.9 L527.3 548.7 L521.2 547.4 L514.6 546.3 L507.6 545.1 L500.2 544.0 L492.4 543.0"/><path d="M563.2 559.4 L562.5 557.9 L560.7 556.5 L558.3 555.1 L555.1 553.7 L551.4 552.3 L547.1 550.9 L542.2 549.5 L536.9 548.2 L531.1 546.9 L524.7 545.6 L518.0 544.4 L510.8 543.2 L503.1 542.1 L495.0 541.1"/><path d="M567.8 557.6 L567.0 556.1 L565.2 554.7 L562.7 553.3 L559.5 551.8 L555.6 550.4 L551.2 548.9 L546.3 547.5 L540.8 546.2 L534.8 544.9 L528.4 543.6 L521.4 542.3 L514.1 541.1 L506.2 540.0 L498.0 538.9"/><path d="M572.3 555.8 L571.4 554.2 L569.6 552.8 L567.1 551.3 L563.8 549.8 L559.9 548.4 L555.4 546.9 L550.3 545.5 L544.7 544.1 L538.6 542.7 L532.0 541.4 L525.0 540.2 L517.4 538.9 L509.5 537.8 L501.0 536.7"/><path d="M576.4 553.3 L575.6 551.8 L573.8 550.3 L571.2 548.9 L567.9 547.4 L564.0 545.9 L559.4 544.4 L554.3 543.0 L548.7 541.6 L542.5 540.2 L535.9 538.9 L528.7 537.6 L521.1 536.4 L513.1 535.2 L504.6 534.1"/><path d="M580.6 550.8 L579.8 549.2 L577.9 547.8 L575.3 546.3 L572.0 544.8 L568.0 543.3 L563.5 541.8 L558.3 540.4 L552.7 539.0 L546.5 537.6 L539.8 536.3 L532.6 535.0 L525.0 533.7 L516.9 532.5 L508.3 531.4"/><path d="M584.7 548.2 L583.9 546.6 L582.0 545.2 L579.4 543.7 L576.0 542.2 L572.1 540.7 L567.5 539.2 L562.3 537.7 L556.7 536.3 L550.4 534.9 L543.7 533.6 L536.5 532.3 L528.9 531.1 L520.7 529.9 L512.1 528.8"/><path d="M589.2 546.6 L588.4 545.0 L586.5 543.5 L583.8 542.0 L580.4 540.4 L576.4 538.9 L571.7 537.4 L566.4 535.9 L560.6 534.4 L554.2 533.0 L547.4 531.7 L540.0 530.4 L532.2 529.1 L523.8 527.9 L515.1 526.7"/><path d="M593.8 545.0 L592.9 543.3 L591.0 541.8 L588.3 540.2 L584.8 538.7 L580.6 537.1 L575.8 535.5 L570.5 534.0 L564.5 532.5 L558.0 531.1 L551.0 529.7 L543.5 528.4 L535.5 527.1 L527.0 525.8 L518.0 524.7"/><path d="M597.9 542.4 L597.0 540.7 L595.1 539.2 L592.3 537.6 L588.8 536.0 L584.7 534.5 L579.9 532.9 L574.5 531.4 L568.5 529.9 L562.0 528.5 L555.0 527.1 L547.4 525.7 L539.4 524.4 L530.8 523.1 L521.8 522.0"/><path d="M601.7 539.4 L600.8 537.8 L598.9 536.2 L596.2 534.7 L592.7 533.1 L588.5 531.5 L583.8 530.0 L578.4 528.4 L572.4 527.0 L566.0 525.5 L559.0 524.1 L551.4 522.8 L543.4 521.5 L534.9 520.2 L526.0 519.1"/><path d="M605.7 536.7 L604.8 535.0 L602.9 533.5 L600.2 531.9 L596.7 530.3 L592.5 528.8 L587.7 527.2 L582.4 525.7 L576.4 524.2 L569.9 522.8 L562.9 521.4 L555.4 520.0 L547.4 518.7 L538.9 517.5 L529.9 516.3"/><path d="M610.0 534.4 L609.1 532.8 L607.2 531.2 L604.4 529.6 L600.9 528.0 L596.7 526.5 L591.9 524.9 L586.4 523.4 L580.4 521.9 L573.9 520.4 L566.8 519.0 L559.2 517.7 L551.1 516.3 L542.5 515.1 L533.4 513.9"/><path d="M614.5 532.8 L613.7 531.1 L611.7 529.5 L608.9 527.9 L605.3 526.3 L601.0 524.7 L596.1 523.1 L590.5 521.5 L584.4 520.0 L577.7 518.5 L570.5 517.1 L562.7 515.7 L554.5 514.3 L545.7 513.0 L536.5 511.9"/><path d="M619.1 531.1 L618.2 529.4 L616.2 527.8 L613.3 526.1 L609.6 524.5 L605.3 522.8 L600.3 521.2 L594.6 519.6 L588.4 518.1 L581.6 516.6 L574.2 515.1 L566.3 513.7 L557.9 512.3 L549.0 511.0 L539.6 509.8"/><path d="M623.6 529.3 L622.7 527.6 L620.6 525.9 L617.7 524.3 L614.0 522.6 L609.6 520.9 L604.5 519.2 L598.7 517.6 L592.4 516.0 L585.5 514.5 L578.0 513.0 L569.9 511.6 L561.4 510.2 L552.3 508.9 L542.8 507.6"/><path d="M627.2 526.2 L626.2 524.4 L624.2 522.8 L621.3 521.2 L617.6 519.5 L613.2 517.8 L608.2 516.2 L602.5 514.6 L596.2 513.0 L589.4 511.5 L582.0 510.1 L574.0 508.6 L565.6 507.3 L556.6 505.9 L547.1 504.7"/><path d="M630.6 522.8 L629.7 521.1 L627.7 519.5 L624.9 517.9 L621.2 516.3 L616.9 514.6 L611.9 513.0 L606.3 511.4 L600.1 509.9 L593.4 508.4 L586.1 506.9 L578.2 505.5 L569.9 504.2 L561.0 502.9 L551.7 501.7"/><path d="M634.6 520.1 L633.7 518.4 L631.7 516.8 L628.9 515.1 L625.2 513.5 L620.9 511.9 L615.9 510.2 L610.3 508.7 L604.2 507.1 L597.4 505.6 L590.1 504.2 L582.3 502.8 L574.0 501.4 L565.1 500.1 L555.8 498.9"/><path d="M638.7 517.5 L637.8 515.8 L635.8 514.2 L633.0 512.6 L629.4 510.9 L625.0 509.3 L620.1 507.7 L614.5 506.1 L608.3 504.6 L601.5 503.1 L594.2 501.6 L586.4 500.2 L578.1 498.9 L569.2 497.6 L559.9 496.4"/><path d="M642.9 515.1 L642.0 513.3 L640.0 511.7 L637.2 510.1 L633.5 508.5 L629.2 506.8 L624.2 505.2 L618.6 503.6 L612.4 502.1 L605.7 500.6 L598.4 499.2 L590.5 497.8 L582.2 496.4 L573.3 495.1 L564.0 493.9"/><path d="M647.1 512.6 L646.2 510.9 L644.2 509.3 L641.4 507.7 L637.7 506.0 L633.4 504.4 L628.4 502.8 L622.8 501.2 L616.6 499.7 L609.8 498.2 L602.5 496.7 L594.7 495.3 L586.3 493.9 L577.4 492.6 L568.1 491.4"/><path d="M651.3 510.2 L650.4 508.5 L648.4 506.9 L645.6 505.3 L641.9 503.6 L637.6 502.0 L632.6 500.4 L627.0 498.8 L620.8 497.2 L614.0 495.7 L606.7 494.3 L598.8 492.9 L590.4 491.5 L581.6 490.2 L572.2 489.0"/><path d="M655.6 507.9 L654.7 506.2 L652.7 504.6 L649.8 503.0 L646.2 501.3 L641.8 499.7 L636.8 498.1 L631.2 496.5 L625.0 494.9 L618.2 493.4 L610.9 492.0 L603.1 490.6 L594.7 489.2 L585.8 487.9 L576.4 486.7"/><path d="M659.9 505.8 L659.0 504.0 L657.0 502.4 L654.1 500.8 L650.5 499.1 L646.1 497.5 L641.1 495.9 L635.5 494.3 L629.3 492.7 L622.5 491.2 L615.1 489.8 L607.2 488.4 L598.8 487.0 L589.9 485.7 L580.5 484.5"/><path d="M664.3 503.7 L663.4 501.9 L661.4 500.3 L658.5 498.7 L654.8 497.0 L650.5 495.4 L645.4 493.7 L639.8 492.1 L633.5 490.6 L626.7 489.1 L619.3 487.6 L611.3 486.2 L602.9 484.8 L593.9 483.5 L584.5 482.3"/><path d="M668.7 501.6 L667.8 499.9 L665.8 498.3 L662.9 496.6 L659.2 495.0 L654.8 493.3 L649.8 491.7 L644.1 490.1 L637.8 488.5 L630.9 487.0 L623.5 485.5 L615.6 484.1 L607.1 482.7 L598.1 481.4 L588.6 480.2"/><path d="M671.6 497.9 L670.7 496.3 L668.7 494.7 L665.9 493.1 L662.4 491.5 L658.2 489.9 L653.3 488.3 L647.8 486.8 L641.8 485.3 L635.2 483.8 L628.1 482.4 L620.4 481.0 L612.2 479.7 L603.6 478.4 L594.5 477.3"/><path d="M675.3 495.0 L674.5 493.4 L672.5 491.9 L669.8 490.3 L666.3 488.7 L662.1 487.2 L657.4 485.6 L652.0 484.1 L646.1 482.6 L639.6 481.2 L632.6 479.8 L625.0 478.4 L617.0 477.1 L608.5 475.9 L599.6 474.7"/><path d="M679.9 493.5 L679.0 491.8 L677.1 490.3 L674.3 488.7 L670.8 487.1 L666.6 485.5 L661.8 484.0 L656.3 482.4 L650.3 480.9 L643.8 479.5 L636.7 478.1 L629.1 476.7 L621.0 475.4 L612.4 474.1 L603.3 473.0"/><path d="M684.4 491.6 L683.5 490.0 L681.5 488.4 L678.8 486.8 L675.2 485.2 L671.0 483.6 L666.2 482.0 L660.7 480.5 L654.7 479.0 L648.1 477.6 L641.0 476.1 L633.3 474.8 L625.2 473.4 L616.6 472.2 L607.5 471.0"/><path d="M687.9 488.5 L687.0 486.8 L685.1 485.3 L682.4 483.8 L679.0 482.2 L674.9 480.7 L670.2 479.1 L664.8 477.6 L659.0 476.2 L652.6 474.8 L645.6 473.4 L638.2 472.1 L630.3 470.8 L621.9 469.5 L613.0 468.4"/><path d="M690.5 484.8 L689.7 483.2 L687.9 481.8 L685.3 480.3 L682.0 478.8 L678.0 477.3 L673.5 475.8 L668.4 474.4 L662.8 473.0 L656.7 471.7 L650.1 470.4 L643.0 469.1 L635.4 467.8 L627.4 466.7 L618.9 465.6"/><path d="M694.7 482.4 L693.9 480.9 L692.1 479.4 L689.5 477.9 L686.2 476.5 L682.3 475.0 L677.9 473.5 L672.8 472.1 L667.2 470.7 L661.1 469.4 L654.6 468.1 L647.5 466.8 L640.0 465.6 L632.0 464.4 L623.6 463.3"/><path d="M698.9 480.0 L698.1 478.5 L696.3 477.0 L693.8 475.6 L690.5 474.1 L686.7 472.7 L682.2 471.2 L677.2 469.8 L671.7 468.4 L665.6 467.1 L659.1 465.8 L652.1 464.5 L644.7 463.3 L636.8 462.2 L628.4 461.1"/><path d="M701.9 476.5 L701.2 475.0 L699.5 473.6 L697.0 472.3 L693.9 470.9 L690.2 469.5 L686.0 468.1 L681.2 466.7 L675.9 465.4 L670.2 464.2 L664.0 462.9 L657.3 461.7 L650.1 460.6 L642.6 459.4 L634.6 458.4"/><path d="M705.5 473.5 L704.8 472.1 L703.1 470.8 L700.8 469.4 L697.8 468.1 L694.2 466.7 L690.1 465.4 L685.4 464.1 L680.3 462.8 L674.7 461.6 L668.7 460.4 L662.2 459.2 L655.3 458.1 L648.0 457.0 L640.3 456.0"/><path d="M709.9 471.4 L709.2 470.0 L707.5 468.7 L705.2 467.4 L702.2 466.1 L698.7 464.7 L694.6 463.4 L690.0 462.1 L684.9 460.8 L679.4 459.6 L673.4 458.4 L667.0 457.3 L660.2 456.2 L653.0 455.1 L645.3 454.1"/><path d="M712.6 467.8 L711.9 466.5 L710.4 465.3 L708.2 464.0 L705.4 462.8 L702.0 461.5 L698.2 460.3 L693.9 459.0 L689.1 457.8 L683.9 456.7 L678.2 455.6 L672.2 454.5 L665.8 453.4 L658.9 452.4 L651.7 451.5"/><path d="M716.3 465.0 L715.6 463.7 L714.1 462.5 L712.0 461.3 L709.3 460.1 L706.0 458.8 L702.3 457.6 L698.1 456.4 L693.5 455.3 L688.4 454.2 L682.9 453.1 L677.1 452.0 L670.8 451.0 L664.2 450.0 L657.2 449.1"/><path d="M719.4 461.7 L718.8 460.5 L717.4 459.3 L715.3 458.2 L712.7 457.0 L709.6 455.8 L706.1 454.7 L702.0 453.5 L697.6 452.4 L692.8 451.4 L687.6 450.3 L682.0 449.3 L676.0 448.3 L669.7 447.4 L663.0 446.6"/><path d="M721.0 457.1 L720.4 456.0 L719.1 455.0 L717.3 453.9 L714.9 452.9 L712.1 451.8 L708.9 450.8 L705.3 449.7 L701.2 448.7 L696.9 447.8 L692.1 446.8 L687.0 445.9 L681.6 445.0 L675.9 444.2 L669.8 443.4"/><path d="M724.4 453.9 L723.8 452.9 L722.6 451.9 L720.8 450.9 L718.5 449.9 L715.9 448.8 L712.8 447.8 L709.3 446.9 L705.4 445.9 L701.2 445.0 L696.7 444.1 L691.8 443.2 L686.7 442.4 L681.2 441.6 L675.4 440.8"/><path d="M724.3 449.1 L723.8 448.2 L722.7 447.3 L721.1 446.4 L719.0 445.5 L716.6 444.6 L713.8 443.6 L710.7 442.8 L707.2 441.9 L703.5 441.1 L699.4 440.3 L695.0 439.5 L690.3 438.7 L685.4 438.0 L680.1 437.3"/><path d="M722.5 444.9 L722.0 444.1 L721.0 443.3 L719.6 442.5 L717.8 441.6 L715.6 440.8 L713.1 440.0 L710.3 439.2 L707.2 438.4 L703.8 437.7 L700.1 437.0 L696.2 436.2 L692.0 435.6 L687.5 434.9 L682.8 434.3"/><path d="M718.8 441.8 L718.4 441.0 L717.5 440.3 L716.3 439.6 L714.7 438.9 L712.8 438.2 L710.6 437.5 L708.1 436.8 L705.4 436.1 L702.4 435.5 L699.2 434.8 L695.8 434.2 L692.1 433.6 L688.2 433.0 L684.2 432.5"/><path d="M714.9 438.9 L714.6 438.2 L713.8 437.6 L712.8 437.0 L711.4 436.4 L709.8 435.8 L708.0 435.2 L705.9 434.6 L703.6 434.0 L701.1 433.5 L698.3 432.9 L695.4 432.4 L692.3 431.9 L689.0 431.4 L685.5 431.0"/><path d="M710.9 436.1 L710.6 435.6 L710.0 435.1 L709.2 434.7 L708.1 434.2 L706.8 433.7 L705.3 433.2 L703.6 432.7 L701.7 432.2 L699.7 431.8 L697.4 431.3 L695.1 430.9 L692.6 430.5 L689.9 430.1 L687.1 429.7"/><path d="M706.7 433.8 L706.4 433.4 L706.0 433.1 L705.3 432.7 L704.5 432.3 L703.4 431.9 L702.3 431.5 L701.0 431.2 L699.5 430.8 L697.9 430.5 L696.2 430.1 L694.4 429.8 L692.4 429.5 L690.3 429.2 L688.1 428.9"/><path d="M702.2 432.0 L702.0 431.7 L701.7 431.4 L701.2 431.2 L700.6 430.9 L699.9 430.6 L699.1 430.3 L698.1 430.1 L697.1 429.8 L696.0 429.6 L694.8 429.3 L693.5 429.1 L692.1 428.9 L690.6 428.7 L689.0 428.5"/><path d="M697.7 430.1 L697.6 430.0 L697.4 429.8 L697.2 429.7 L696.9 429.5 L696.5 429.4 L696.1 429.2 L695.6 429.1 L695.0 429.0 L694.5 428.8 L693.8 428.7 L693.1 428.6 L692.4 428.5 L691.6 428.4 L690.8 428.3"/></g></g><path d="M399.0 602.6 L408.8 597.0 L422.5 590.1 L436.3 582.6 L450.0 573.6 L463.8 564.0 L477.6 553.7 L491.3 543.8 L505.1 533.7 L518.8 524.1 L531.5 515.2 L544.6 506.4 L557.5 497.8 L571.3 489.5 L585.0 482.0 L598.8 475.1 L612.6 468.6 L626.3 462.0 L639.8 456.2 L648.3 453.0 L657.5 449.0 L666.9 444.8 L675.8 440.6 L681.2 436.5 L684.9 431.5 L688.6 428.5 L692.2 428.1 L697.7 430.1 L703.2 432.4 L708.7 434.7 L714.2 438.3 L719.7 442.5 L723.8 446.1 L724.7 451.6 L724.3 454.4 L721.5 456.2 L720.1 458.9 L719.2 462.6 L717.9 464.4 L714.2 465.8 L712.4 468.1 L711.4 470.8 L706.9 472.7 L702.3 475.4 L701.4 478.1 L697.7 480.9 L693.1 483.2 L688.6 485.9 L687.7 489.1 L684.0 491.9 L679.4 493.7 L673.9 495.5 L671.2 498.3 L669.7 501.2 L662.1 504.7 L653.8 508.8 L644.2 514.3 L636.0 519.1 L629.1 523.9 L624.9 528.8 L618.1 531.5 L608.4 535.0 L602.9 538.4 L598.8 541.8 L593.3 545.3 L585.0 548.0 L579.5 551.5 L572.7 555.6 L564.4 559.0 L557.5 561.1 L552.0 563.8 L546.5 568.7 L539.5 570.2 L532.6 572.2 L525.7 576.4 L518.8 581.2 L512.0 583.3 L505.1 586.0 L498.2 589.4 L491.3 592.5 L484.4 595.0 L477.6 597.0 L470.7 599.8 L463.8 602.5 L456.9 604.3 L450.0 606.0 L443.2 607.3 L436.3 608.4 L429.4 609.1 L422.5 609.7 L415.6 609.7 L408.8 609.4 L399.0 607.3 Z" fill="none" stroke="#283b35" stroke-opacity="0.85" stroke-width="0.7" stroke-linejoin="round"/><path d="M641 410 V514" stroke="#dfe9e5" stroke-opacity="0.30" stroke-width="1.4" stroke-dasharray="13 4 2 4" fill="none"/><g fill="none" stroke="#bdbdbd" stroke-width="1.15"><path d="M790.7 541.0 L795.4 537.7 L799.5 534.3 L803.0 530.9 L805.8 527.4 L808.1 523.8 L809.7 520.2 L810.6 516.6 L810.9 512.9 L810.5 509.3 L809.5 505.7 L807.8 502.1 L805.5 498.6 L802.6 495.1 L799.0 491.7 L794.8 488.4 L790.0 485.2 L784.7 482.0 L778.8 479.1 L772.3 476.2 L765.4 473.5 L758.0 471.0 L750.1 468.6 L741.8 466.4 L733.1 464.4"/><path d="M717.7 461.4 L708.1 459.9 L698.3 458.6 L688.2 457.5 L678.0 456.7 L667.6 456.1 L657.2 455.6 L646.6 455.5 L636.1 455.5 L625.6 455.8 L615.1 456.3 L604.7 457.0 L594.5 457.9 L584.4 459.1 L574.6 460.4 L565.0 462.0 L555.7 463.8 L546.7 465.7 L538.1 467.9 L529.9 470.2 L522.1 472.7 L514.8 475.4 L508.0 478.2 L501.7 481.1 L495.9 484.2"/><path d="M491.1 487.0 L486.4 490.3 L482.3 493.7 L478.8 497.1 L476.0 500.6 L473.7 504.2 L472.1 507.8 L471.2 511.4 L470.9 515.1 L471.3 518.7 L472.3 522.3 L474.0 525.9 L476.3 529.4 L479.2 532.9 L482.8 536.3 L487.0 539.6 L491.8 542.8 L497.1 546.0 L503.0 548.9 L509.5 551.8 L516.4 554.5 L523.8 557.0 L531.7 559.4 L540.0 561.6 L548.7 563.6"/><path d="M564.1 566.6 L573.7 568.1 L583.5 569.4 L593.6 570.5 L603.8 571.3 L614.2 571.9 L624.6 572.4 L635.2 572.5 L645.7 572.5 L656.2 572.2 L666.7 571.7 L677.1 571.0 L687.3 570.1 L697.4 568.9 L707.2 567.6 L716.8 566.0 L726.1 564.2 L735.1 562.3 L743.7 560.1 L751.9 557.8 L759.7 555.3 L767.0 552.6 L773.8 549.8 L780.1 546.9 L785.9 543.8"/><path d="M717.7 664.9 L722.7 661.2 L727.4 656.9 L731.7 652.0 L735.7 646.7 L739.3 640.8 L742.5 634.4 L745.3 627.5 L747.8 620.3 L749.8 612.6 L751.4 604.5 L752.6 596.1 L753.3 587.3 L753.6 578.3 L753.5 569.0 L752.9 559.5 L752.0 549.9 L750.5 540.1 L748.7 530.2 L746.4 520.2 L743.8 510.3 L740.7 500.3 L737.3 490.4 L733.5 480.5 L729.3 470.8"/><path d="M721.5 454.9 L716.4 445.7 L711.1 436.8 L705.5 428.2 L699.6 419.9 L693.5 412.0 L687.3 404.5 L680.8 397.4 L674.2 390.8 L667.4 384.6 L660.6 378.9 L653.6 373.8 L646.7 369.2 L639.7 365.1 L632.7 361.6 L625.7 358.7 L618.8 356.4 L612.0 354.8 L605.3 353.7 L598.7 353.2 L592.3 353.4 L586.1 354.2 L580.1 355.6 L574.3 357.6 L568.8 360.2"/><path d="M564.1 363.1 L559.1 366.8 L554.4 371.1 L550.1 376.0 L546.1 381.3 L542.5 387.2 L539.3 393.6 L536.5 400.5 L534.0 407.7 L532.0 415.4 L530.4 423.5 L529.2 431.9 L528.5 440.7 L528.2 449.7 L528.3 459.0 L528.9 468.5 L529.8 478.1 L531.3 487.9 L533.1 497.8 L535.4 507.8 L538.0 517.7 L541.1 527.7 L544.5 537.6 L548.3 547.5 L552.5 557.2"/><path d="M560.3 573.1 L565.4 582.3 L570.7 591.2 L576.3 599.8 L582.2 608.1 L588.3 616.0 L594.5 623.5 L601.0 630.6 L607.6 637.2 L614.4 643.4 L621.2 649.1 L628.2 654.2 L635.1 658.8 L642.1 662.9 L649.1 666.4 L656.1 669.3 L663.0 671.6 L669.8 673.2 L676.5 674.3 L683.1 674.8 L689.5 674.6 L695.7 673.8 L701.7 672.4 L707.5 670.4 L713.0 667.8"/><path d="M570.3 636.5 L575.9 632.9 L581.6 628.8 L587.6 624.3 L593.8 619.3 L600.2 614.0 L606.7 608.2 L613.4 602.1 L620.2 595.7 L627.0 588.9 L633.9 581.9 L640.8 574.5 L647.8 567.0 L654.7 559.2 L661.5 551.3 L668.3 543.2 L675.0 535.1 L681.5 526.8 L687.9 518.5 L694.1 510.2 L700.1 501.8 L705.9 493.6 L711.4 485.4 L716.6 477.3 L721.6 469.4"/><path d="M729.2 456.4 L733.3 449.0 L737.0 441.8 L740.3 434.9 L743.3 428.4 L745.9 422.1 L748.1 416.2 L749.8 410.7 L751.1 405.6 L752.0 400.9 L752.5 396.6 L752.6 392.8 L752.2 389.5 L751.4 386.6 L750.1 384.3 L748.5 382.4 L746.4 381.0 L743.9 380.2 L741.1 379.8 L737.8 380.0 L734.2 380.7 L730.2 381.9 L725.8 383.7 L721.2 385.9 L716.2 388.6"/><path d="M711.5 391.5 L705.9 395.1 L700.2 399.2 L694.2 403.7 L688.0 408.7 L681.6 414.0 L675.1 419.8 L668.4 425.9 L661.6 432.3 L654.8 439.1 L647.9 446.1 L641.0 453.5 L634.0 461.0 L627.1 468.8 L620.3 476.7 L613.5 484.8 L606.8 492.9 L600.3 501.2 L593.9 509.5 L587.7 517.8 L581.7 526.2 L575.9 534.4 L570.4 542.6 L565.2 550.7 L560.2 558.6"/><path d="M552.6 571.6 L548.5 579.0 L544.8 586.2 L541.5 593.1 L538.5 599.6 L535.9 605.9 L533.7 611.8 L532.0 617.3 L530.7 622.4 L529.8 627.1 L529.3 631.4 L529.2 635.2 L529.6 638.5 L530.4 641.4 L531.7 643.7 L533.3 645.6 L535.4 647.0 L537.9 647.8 L540.7 648.2 L544.0 648.0 L547.6 647.3 L551.6 646.1 L556.0 644.3 L560.6 642.1 L565.6 639.4"/></g></svg></div>
<div class="t" style="left:529.0px;top:491.0px;font-family:'Liberation Serif',serif;font-size:11.6px;color:#2a2a2a;">X</div>
<div class="t" style="left:575.9px;top:550.0px;font-family:'Liberation Serif',serif;font-size:11.6px;color:#2a2a2a;">Y</div>
<div class="t" style="left:637.5px;top:396.0px;font-family:'Liberation Serif',serif;font-size:11.6px;color:#2a2a2a;">Z</div>
<div class="t" style="left:404.40px;top:738.00px;font-family:'Liberation Mono',monospace;font-size:11.667px;letter-spacing:0.00px;color:#1c1c1c;transform:scaleY(0.900);transform-origin:0 8px;">Wing span       =     0.783 m</div>
<div class="t" style="left:404.40px;top:752.00px;font-family:'Liberation Mono',monospace;font-size:11.667px;letter-spacing:0.00px;color:#1c1c1c;transform:scaleY(0.900);transform-origin:0 8px;">xyProj. span    =     0.778 m</div>
<div class="t" style="left:404.40px;top:766.00px;font-family:'Liberation Mono',monospace;font-size:11.667px;letter-spacing:0.00px;color:#1c1c1c;transform:scaleY(0.900);transform-origin:0 8px;">Wing area       =     0.078 m²</div>
<div class="t" style="left:404.40px;top:780.00px;font-family:'Liberation Mono',monospace;font-size:11.667px;letter-spacing:0.00px;color:#1c1c1c;transform:scaleY(0.900);transform-origin:0 8px;">Projected area  =     0.078 m²</div>
<div class="t" style="left:404.40px;top:794.00px;font-family:'Liberation Mono',monospace;font-size:11.667px;letter-spacing:0.00px;color:#1c1c1c;transform:scaleY(0.900);transform-origin:0 8px;">Mass            =     0.000 kg</div>
<div class="t" style="left:404.40px;top:808.00px;font-family:'Liberation Mono',monospace;font-size:11.667px;letter-spacing:0.00px;color:#1c1c1c;transform:scaleY(0.900);transform-origin:0 8px;">CoG = (0.000, 0.000, 0.000) m</div>
<div class="t" style="left:404.40px;top:822.00px;font-family:'Liberation Mono',monospace;font-size:11.667px;letter-spacing:0.00px;color:#1c1c1c;transform:scaleY(0.900);transform-origin:0 8px;">Wing load       =     0.000 kg/m²</div>
<div class="t" style="left:404.40px;top:836.00px;font-family:'Liberation Mono',monospace;font-size:11.667px;letter-spacing:0.00px;color:#1c1c1c;transform:scaleY(0.900);transform-origin:0 8px;">Root chord      =     0.123 m</div>
<div class="t" style="left:404.40px;top:850.00px;font-family:'Liberation Mono',monospace;font-size:11.667px;letter-spacing:0.00px;color:#1c1c1c;transform:scaleY(0.900);transform-origin:0 8px;">MAC             =     0.106 m</div>
<div class="t" style="left:404.40px;top:864.00px;font-family:'Liberation Mono',monospace;font-size:11.667px;letter-spacing:0.00px;color:#1c1c1c;transform:scaleY(0.900);transform-origin:0 8px;">Tip twist       =     0.199°</div>
<div class="t" style="left:404.40px;top:878.00px;font-family:'Liberation Mono',monospace;font-size:11.667px;letter-spacing:0.00px;color:#1c1c1c;transform:scaleY(0.900);transform-origin:0 8px;">Aspect Ratio    =     7.857</div>
<div class="t" style="left:404.40px;top:892.00px;font-family:'Liberation Mono',monospace;font-size:11.667px;letter-spacing:0.00px;color:#1c1c1c;transform:scaleY(0.900);transform-origin:0 8px;">Taper Ratio     =     0.097</div>
<div class="t" style="left:404.40px;top:906.00px;font-family:'Liberation Mono',monospace;font-size:11.667px;letter-spacing:0.00px;color:#1c1c1c;transform:scaleY(0.900);transform-origin:0 8px;">Root-Tip Sweep  =    16.168°</div>
<!-- right -->
<div class="abs" style="left:887px;top:106px;width:313px;height:22px;background:#dedede;border-top:1px solid #cecece;border-bottom:1px solid #cbcbcb;border-right:1px solid #d0d0d0;border-left:1px solid #d4d4d4;box-sizing:border-box;"></div>
<div class="t" style="left:891.77px;top:114.00px;font-family:'Liberation Sans',sans-serif;font-size:11.80px;letter-spacing:-0.066px;color:#111;">Analysis 3d</div>
<svg class="abs" style="left:1160px;top:106px;" width="40" height="22" viewBox="1160 106 40 22" >
<rect x="1167.15" y="113.65" width="4.2" height="4.4" fill="none" stroke="#222" stroke-width="1.1"/>
<rect x="1166.60" y="113.10" width="5.3" height="1.6" fill="#222"/>
<rect x="1164.95" y="116.75" width="4.2" height="4.4" fill="#dedede" stroke="#222" stroke-width="1.1"/>
<rect x="1164.40" y="116.20" width="5.3" height="1.6" fill="#222"/>
<path d="M1185.60 114.50 L1192.40 121.30 M1192.40 114.50 L1185.60 121.30" stroke="#222" stroke-width="1.8" fill="none"/>
</svg>
<div class="t" style="left:1039.80px;top:143.00px;font-family:'Liberation Sans',sans-serif;font-size:11.80px;letter-spacing:0.000px;color:#111;">α</div>
<div class="abs" style="left:897px;top:162px;width:294px;height:198px;background:#fcfcfc;border:1px solid #f0f0f0;border-radius:0 0 5px 5px;box-sizing:border-box;"></div>
<div class="abs" style="left:897px;top:162px;width:294px;height:22px;background:#ffffff;border-bottom:1px solid #eaeaea;box-sizing:border-box;"></div>
<div class="abs" style="left:925px;top:162px;width:1px;height:21px;background:#e6e6e6;"></div>
<div class="abs" style="left:1000px;top:162px;width:1px;height:21px;background:#e6e6e6;"></div>
<div class="abs" style="left:1075px;top:162px;width:1px;height:21px;background:#e6e6e6;"></div>
<div class="t" style="left:948.6px;top:168.00px;font-family:'Liberation Mono',monospace;font-size:11.667px;transform:scaleY(0.9);transform-origin:0 8px;color:#222;">Min.</div>
<div class="t" style="left:1023.6px;top:168.00px;font-family:'Liberation Mono',monospace;font-size:11.667px;transform:scaleY(0.9);transform-origin:0 8px;color:#222;">Max.</div>
<div class="t" style="left:1130.4px;top:168.00px;font-family:'Liberation Mono',monospace;font-size:11.667px;transform:scaleY(0.9);transform-origin:0 8px;color:#222;">Δ</div>
<div class="abs" style="left:897px;top:370px;width:16px;height:16px;background:#f4f4f4;border:1px solid #555;border-radius:4.5px;box-sizing:border-box;"></div>
<div class="t" style="left:916.67px;top:374.00px;font-family:'Liberation Sans',sans-serif;font-size:11.80px;letter-spacing:0.099px;color:#a2a2a2;">Store operating points</div>
<div class="abs" style="left:1058px;top:370px;width:16px;height:16px;background:#6f6f6f;border:1px solid #4c4c4c;border-radius:4.5px;box-sizing:border-box;"></div>
<svg class="abs" style="left:1058px;top:370px;" width="16" height="16" viewBox="1058 370 16 16" ><path d="M1061.7 378.4 L1064.6 380.7 L1070.6 375.4" fill="none" stroke="#e6ecf2" stroke-width="1.1" stroke-linecap="round" stroke-linejoin="round"/></svg>
<div class="t" style="left:1078.01px;top:374.00px;font-family:'Liberation Sans',sans-serif;font-size:11.80px;letter-spacing:0.091px;color:#a2a2a2;">Compute derivatives</div>
<div class="abs" style="left:898px;top:396px;width:292px;height:20px;background:#f1f1f1;border:1px solid #4a4a4a;border-bottom-color:#2e2e2e;border-radius:4.5px;box-sizing:border-box;"></div>
<div class="t" style="left:1018.81px;top:402.00px;font-family:'Liberation Sans',sans-serif;font-size:11.80px;letter-spacing:0.064px;color:#8c8c8c;">Calculate</div>
<div class="abs" style="left:887px;top:432px;width:313px;height:22px;background:#dedede;border-top:1px solid #cecece;border-bottom:1px solid #cbcbcb;border-right:1px solid #d0d0d0;border-left:1px solid #d4d4d4;box-sizing:border-box;"></div>
<div class="t" style="left:891.33px;top:439.00px;font-family:'Liberation Sans',sans-serif;font-size:11.80px;letter-spacing:-0.087px;color:#111;">Plane 3d view</div>
<svg class="abs" style="left:1160px;top:432px;" width="40" height="22" viewBox="1160 432 40 22" >
<rect x="1167.15" y="439.65" width="4.2" height="4.4" fill="none" stroke="#222" stroke-width="1.1"/>
<rect x="1166.60" y="439.10" width="5.3" height="1.6" fill="#222"/>
<rect x="1164.95" y="442.75" width="4.2" height="4.4" fill="#dedede" stroke="#222" stroke-width="1.1"/>
<rect x="1164.40" y="442.20" width="5.3" height="1.6" fill="#222"/>
<path d="M1185.60 440.50 L1192.40 447.30 M1192.40 440.50 L1185.60 447.30" stroke="#222" stroke-width="1.8" fill="none"/>
</svg>
<div class="abs" style="left:888px;top:479.5px;width:312px;height:443px;background:#fbfbfb;border:1px solid #ededed;border-radius:6px;box-sizing:border-box;"></div>
<div class="abs" style="left:890px;top:458px;width:58.3px;height:20.5px;background:#fbfbfb;border:1px solid #ebebeb;border-radius:5px;box-sizing:border-box;"></div>
<div class="abs" style="left:951.5px;top:458px;width:52.7px;height:20.5px;background:#f5f5f5;border:1px solid #e8e8e8;border-radius:5px;box-sizing:border-box;"></div>
<div class="abs" style="left:1007.5px;top:458px;width:62.7px;height:20.5px;background:#f5f5f5;border:1px solid #e8e8e8;border-radius:5px;box-sizing:border-box;"></div>
<div class="abs" style="left:1073.5px;top:458px;width:82px;height:20.5px;background:#f5f5f5;border:1px solid #e8e8e8;border-radius:5px;box-sizing:border-box;"></div>
<div class="abs" style="left:1158.5px;top:458px;width:13px;height:21px;overflow:hidden;"><div class="abs" style="left:0;top:0;width:60px;height:20.5px;background:#f5f5f5;border:1px solid #e8e8e8;border-radius:5px;box-sizing:border-box;"></div></div>
<div class="t" style="left:898.43px;top:463.00px;font-family:'Liberation Sans',sans-serif;font-size:11.80px;letter-spacing:-0.083px;color:#111;">Display</div>
<div class="t" style="left:960.37px;top:464.00px;font-family:'Liberation Sans',sans-serif;font-size:11.80px;letter-spacing:-0.517px;color:#111;">Scales</div>
<div class="t" style="left:1016.07px;top:464.00px;font-family:'Liberation Sans',sans-serif;font-size:11.80px;letter-spacing:0.254px;color:#111;">Stability</div>
<div class="t" style="left:1082.77px;top:464.00px;font-family:'Liberation Sans',sans-serif;font-size:11.80px;letter-spacing:-0.086px;color:#111;">Streamlines</div>
<div class="abs" style="left:1167.6px;top:464.5px;width:1.3px;height:8.6px;background:#111;"></div>
<div class="abs" style="left:1172px;top:457px;width:12.5px;height:20.3px;background:#fbfbfb;border-radius:4px;box-shadow:0 0 0 0.6px #e8e8e8,0 1px 0 0 #cfcfcf;"></div>
<div class="abs" style="left:1186.7px;top:457px;width:12.5px;height:20.3px;background:#fbfbfb;border-radius:4px;box-shadow:0 0 0 0.6px #e8e8e8,0 1px 0 0 #cfcfcf;"></div>
<svg class="abs" style="left:1170px;top:456px;" width="32" height="24" viewBox="1170 456 32 24" ><path d="M1181.1 462.2 V472 L1175.5 467.1 Z" fill="#a3a3a3"/><path d="M1190.7 462.2 V472 L1196.2 467.1 Z" fill="#111"/></svg>
<div class="abs" style="left:899px;top:491px;width:16px;height:16px;background:#f4f4f4;border:1px solid #555;border-radius:4.5px;box-sizing:border-box;"></div>
<div class="t" style="left:919.01px;top:495.00px;font-family:'Liberation Sans',sans-serif;font-size:11.80px;letter-spacing:0.187px;color:#a2a2a2;">Cp</div>
<div class="abs" style="left:899px;top:511px;width:16px;height:16px;background:#f4f4f4;border:1px solid #555;border-radius:4.5px;box-sizing:border-box;"></div>
<div class="t" style="left:919.07px;top:515.00px;font-family:'Liberation Sans',sans-serif;font-size:11.80px;letter-spacing:0.185px;color:#a2a2a2;">Strip lift</div>
<div class="abs" style="left:899px;top:531px;width:16px;height:16px;background:#f4f4f4;border:1px solid #555;border-radius:4.5px;box-sizing:border-box;"></div>
<div class="t" style="left:918.63px;top:535.00px;font-family:'Liberation Sans',sans-serif;font-size:11.80px;letter-spacing:-0.017px;color:#a2a2a2;">Part forces</div>
<div class="abs" style="left:899px;top:551px;width:16px;height:16px;background:#f4f4f4;border:1px solid #555;border-radius:4.5px;box-sizing:border-box;"></div>
<div class="t" style="left:918.51px;top:555.00px;font-family:'Liberation Sans',sans-serif;font-size:11.80px;letter-spacing:0.168px;color:#a2a2a2;">Induced drag</div>
<div class="abs" style="left:899px;top:571px;width:16px;height:16px;background:#f4f4f4;border:1px solid #555;border-radius:4.5px;box-sizing:border-box;"></div>
<div class="t" style="left:919.33px;top:575.00px;font-family:'Liberation Sans',sans-serif;font-size:11.80px;letter-spacing:-0.018px;color:#a2a2a2;">Transitions</div>
<div class="abs" style="left:899px;top:591px;width:16px;height:16px;background:#f4f4f4;border:1px solid #555;border-radius:4.5px;box-sizing:border-box;"></div>
<div class="t" style="left:918.63px;top:595.00px;font-family:'Liberation Sans',sans-serif;font-size:11.80px;letter-spacing:-0.266px;color:#a2a2a2;">Flaps</div>
<div class="abs" style="left:899px;top:611px;width:16px;height:16px;background:#f4f4f4;border:1px solid #555;border-radius:4.5px;box-sizing:border-box;"></div>
<div class="t" style="left:919.54px;top:615.00px;font-family:'Liberation Sans',sans-serif;font-size:11.80px;letter-spacing:-0.192px;color:#a2a2a2;">Wake panels</div>
<div class="abs" style="left:899px;top:631px;width:16px;height:16px;background:#f4f4f4;border:1px solid #555;border-radius:4.5px;box-sizing:border-box;"></div>
<div class="t" style="left:919.54px;top:635.00px;font-family:'Liberation Sans',sans-serif;font-size:11.80px;letter-spacing:-0.055px;color:#a2a2a2;">Vortons</div>
<div class="abs" style="left:899px;top:651px;width:16px;height:16px;background:#f4f4f4;border:1px solid #555;border-radius:4.5px;box-sizing:border-box;"></div>
<div class="t" style="left:918.63px;top:655.00px;font-family:'Liberation Sans',sans-serif;font-size:11.80px;letter-spacing:0.033px;color:#111;">Pick value</div>
<div class="abs" style="left:899px;top:674px;width:16px;height:16px;background:#f4f4f4;border:1px solid #555;border-radius:4.5px;box-sizing:border-box;"></div>
<div class="t" style="left:919.57px;top:678.00px;font-family:'Liberation Sans',sans-serif;font-size:11.80px;letter-spacing:0.342px;color:#a2a2a2;">Animate</div>
<div class="abs" style="left:1044px;top:491px;width:16px;height:16px;background:#f4f4f4;border:1px solid #555;border-radius:4.5px;box-sizing:border-box;"></div>
<div class="t" style="left:1064.37px;top:495.00px;font-family:'Liberation Sans',sans-serif;font-size:11.80px;letter-spacing:0.000px;color:#a2a2a2;">γ</div>
<div class="abs" style="left:1044px;top:511px;width:16px;height:16px;background:#f4f4f4;border:1px solid #555;border-radius:4.5px;box-sizing:border-box;"></div>
<div class="t" style="left:1063.43px;top:515.00px;font-family:'Liberation Sans',sans-serif;font-size:11.80px;letter-spacing:0.220px;color:#a2a2a2;">F/s=q.Cp</div>
<div class="abs" style="left:1044px;top:531px;width:16px;height:16px;background:#f4f4f4;border:1px solid #555;border-radius:4.5px;box-sizing:border-box;"></div>
<div class="t" style="left:1063.43px;top:535.00px;font-family:'Liberation Sans',sans-serif;font-size:11.80px;letter-spacing:0.576px;color:#a2a2a2;">Moments</div>
<div class="abs" style="left:1044px;top:551px;width:16px;height:16px;background:#f4f4f4;border:1px solid #555;border-radius:4.5px;box-sizing:border-box;"></div>
<div class="t" style="left:1064.34px;top:555.00px;font-family:'Liberation Sans',sans-serif;font-size:11.80px;letter-spacing:-0.109px;color:#a2a2a2;">Viscous drag</div>
<div class="abs" style="left:1044px;top:571px;width:16px;height:16px;background:#f4f4f4;border:1px solid #555;border-radius:4.5px;box-sizing:border-box;"></div>
<div class="t" style="left:1063.43px;top:575.00px;font-family:'Liberation Sans',sans-serif;font-size:11.80px;letter-spacing:0.187px;color:#a2a2a2;">Downwash</div>
<div class="abs" style="left:1044px;top:591px;width:16px;height:16px;background:#f4f4f4;border:1px solid #555;border-radius:4.5px;box-sizing:border-box;"></div>
<div class="t" style="left:1063.87px;top:595.00px;font-family:'Liberation Sans',sans-serif;font-size:11.80px;letter-spacing:-0.056px;color:#a2a2a2;">Streamlines</div>
<div class="abs" style="left:1044px;top:611px;width:16px;height:16px;background:#f4f4f4;border:1px solid #555;border-radius:4.5px;box-sizing:border-box;"></div>
<div class="t" style="left:1063.43px;top:615.00px;font-family:'Liberation Sans',sans-serif;font-size:11.80px;letter-spacing:0.139px;color:#a2a2a2;">Flow</div>
<div class="abs" style="left:1044px;top:631px;width:16px;height:16px;background:#f4f4f4;border:1px solid #555;border-radius:4.5px;box-sizing:border-box;"></div>
<div class="t" style="left:1063.81px;top:635.00px;font-family:'Liberation Sans',sans-serif;font-size:11.80px;letter-spacing:-0.009px;color:#a2a2a2;">Ground/Free surface</div>
<svg class="abs" style="left:1040px;top:668px;" width="150" height="30" viewBox="1040 668 150 30" >
<rect x="1043.9" y="677" width="72" height="4" rx="2" fill="#767676"/>
<rect x="1115.9" y="677" width="67.3" height="4" rx="2" fill="#8b8b8b"/>
<circle cx="1115.9" cy="679" r="8.1" fill="#ffffff" stroke="#d2d2d2" stroke-width="0.8"/>
<circle cx="1115.9" cy="679" r="3.9" fill="#7b7b7b"/><rect x="1050.1" y="689" width="1.7" height="6" fill="#b4b4b4"/><rect x="1063.1" y="689" width="1.7" height="5.3" fill="#b4b4b4"/><rect x="1076.1" y="689" width="1.7" height="5.3" fill="#b4b4b4"/><rect x="1089.2" y="689" width="1.7" height="5.3" fill="#b4b4b4"/><rect x="1102.2" y="689" width="1.7" height="5.3" fill="#b4b4b4"/><rect x="1115.1" y="689" width="1.7" height="5.3" fill="#b4b4b4"/><rect x="1127.2" y="689" width="1.7" height="5.3" fill="#b4b4b4"/><rect x="1140.1" y="689" width="1.7" height="5.3" fill="#b4b4b4"/><rect x="1153.1" y="689" width="1.7" height="5.3" fill="#b4b4b4"/><rect x="1166.2" y="689" width="1.7" height="5.3" fill="#b4b4b4"/><rect x="1179.0" y="689" width="1.7" height="6" fill="#b4b4b4"/></svg>
<div class="abs" style="left:953px;top:755px;width:16px;height:16px;background:#0067c0;border:1px solid #0b4f8f;border-radius:4.5px;box-sizing:border-box;"></div>
<svg class="abs" style="left:953px;top:755px;" width="16" height="16" viewBox="953 755 16 16" ><path d="M956.7 763.4 L959.6 765.7 L965.6 760.4" fill="none" stroke="#fff" stroke-width="1.1" stroke-linecap="round" stroke-linejoin="round"/></svg>
<div class="t" style="left:973.27px;top:759.00px;font-family:'Liberation Sans',sans-serif;font-size:11.80px;letter-spacing:-0.728px;color:#111;">Axes</div>
<div class="abs" style="left:953px;top:775px;width:16px;height:16px;background:#0067c0;border:1px solid #0b4f8f;border-radius:4.5px;box-sizing:border-box;"></div>
<svg class="abs" style="left:953px;top:775px;" width="16" height="16" viewBox="953 775 16 16" ><path d="M956.7 783.4 L959.6 785.7 L965.6 780.4" fill="none" stroke="#fff" stroke-width="1.1" stroke-linecap="round" stroke-linejoin="round"/></svg>
<div class="t" style="left:972.77px;top:779.00px;font-family:'Liberation Sans',sans-serif;font-size:11.80px;letter-spacing:-0.348px;color:#111;">Surfaces</div>
<div class="abs" style="left:953px;top:795px;width:16px;height:16px;background:#f4f4f4;border:1px solid #555;border-radius:4.5px;box-sizing:border-box;"></div>
<div class="t" style="left:972.33px;top:799.00px;font-family:'Liberation Sans',sans-serif;font-size:11.80px;letter-spacing:0.015px;color:#111;">Foils</div>
<div class="abs" style="left:1068px;top:755px;width:16px;height:16px;background:#f4f4f4;border:1px solid #555;border-radius:4.5px;box-sizing:border-box;"></div>
<div class="t" style="left:1087.63px;top:759.00px;font-family:'Liberation Sans',sans-serif;font-size:11.80px;letter-spacing:-0.318px;color:#111;">Panels</div>
<div class="abs" style="left:1068px;top:775px;width:16px;height:16px;background:#0067c0;border:1px solid #0b4f8f;border-radius:4.5px;box-sizing:border-box;"></div>
<svg class="abs" style="left:1068px;top:775px;" width="16" height="16" viewBox="1068 775 16 16" ><path d="M1071.7 783.4 L1074.6 785.7 L1080.6 780.4" fill="none" stroke="#fff" stroke-width="1.1" stroke-linecap="round" stroke-linejoin="round"/></svg>
<div class="t" style="left:1088.04px;top:779.00px;font-family:'Liberation Sans',sans-serif;font-size:11.80px;letter-spacing:0.298px;color:#111;">Outline</div>
<div class="abs" style="left:1068px;top:795px;width:16px;height:16px;background:#f4f4f4;border:1px solid #555;border-radius:4.5px;box-sizing:border-box;"></div>
<div class="t" style="left:1087.63px;top:799.00px;font-family:'Liberation Sans',sans-serif;font-size:11.80px;letter-spacing:-0.533px;color:#111;">Masses</div>
<div class="abs" style="left:957.7px;top:820.5px;width:35.2px;height:34.6px;background:#fcfcfc;border-radius:5px;box-shadow:0 0 0 0.6px #ebebeb,0 1px 0 0 #d0d0d0;"></div>
<div class="abs" style="left:1002.7px;top:820.5px;width:35.2px;height:34.6px;background:#fcfcfc;border-radius:5px;box-shadow:0 0 0 0.6px #ebebeb,0 1px 0 0 #d0d0d0;"></div>
<div class="abs" style="left:1047.7px;top:820.5px;width:35.2px;height:34.6px;background:#fcfcfc;border-radius:5px;box-shadow:0 0 0 0.6px #ebebeb,0 1px 0 0 #d0d0d0;"></div>
<div class="abs" style="left:1092.7px;top:820.5px;width:35.2px;height:34.6px;background:#fcfcfc;border-radius:5px;box-shadow:0 0 0 0.6px #ebebeb,0 1px 0 0 #d0d0d0;"></div>
<div class="abs" style="left:935.7px;top:864.3px;width:35.6px;height:34.8px;background:#fcfcfc;border-radius:5px;box-shadow:0 0 0 0.6px #ebebeb,0 1px 0 0 #d0d0d0;"></div>
<div class="abs" style="left:980.7px;top:864.3px;width:35.6px;height:34.8px;background:#fcfcfc;border-radius:5px;box-shadow:0 0 0 0.6px #ebebeb,0 1px 0 0 #d0d0d0;"></div>
<div class="abs" style="left:1025.7px;top:864.3px;width:35.6px;height:34.8px;background:#fcfcfc;border-radius:5px;box-shadow:0 0 0 0.6px #ebebeb,0 1px 0 0 #d0d0d0;"></div>
<div class="abs" style="left:1070.7px;top:864.3px;width:35.6px;height:34.8px;background:#fcfcfc;border-radius:5px;box-shadow:0 0 0 0.6px #ebebeb,0 1px 0 0 #d0d0d0;"></div>
<div class="abs" style="left:1115.7px;top:864.3px;width:35.6px;height:34.8px;background:#fcfcfc;border-radius:5px;box-shadow:0 0 0 0.6px #ebebeb,0 1px 0 0 #d0d0d0;"></div>
<svg class="abs" style="left:930px;top:815px;" width="230" height="90" viewBox="930 815 230 90" ><path d="M969.9 843.7 L969.9 826.7" stroke="#2f64a3" stroke-width="2.6" fill="none"/><path d="M969.9 822.9 L973.1 827.2 L966.6 827.2 Z" fill="#2f64a3"/><path d="M968.6 842.4 L986.5 842.4" stroke="#2f64a3" stroke-width="2.6" fill="none"/><path d="M990.3 842.4 L986.0 845.6 L986.0 839.1 Z" fill="#2f64a3"/><text transform="translate(962.5 829.5) scale(1.14 0.97)" font-family="Liberation Sans" font-weight="bold" font-size="14" fill="#e0000f" text-anchor="middle">z</text><text transform="translate(963.9 853.4) scale(1.14 0.97)" font-family="Liberation Sans" font-weight="bold" font-size="14" fill="#e0000f" text-anchor="middle">x</text><text transform="translate(986.5 853.4) scale(1.14 0.97)" font-family="Liberation Sans" font-weight="bold" font-size="14" fill="#e0000f" text-anchor="middle">y</text><path d="M1014.9 843.7 L1014.9 826.7" stroke="#2f64a3" stroke-width="2.6" fill="none"/><path d="M1014.9 822.9 L1018.1 827.2 L1011.6 827.2 Z" fill="#2f64a3"/><path d="M1013.6 842.4 L1031.5 842.4" stroke="#2f64a3" stroke-width="2.6" fill="none"/><path d="M1035.3 842.4 L1031.0 845.6 L1031.0 839.1 Z" fill="#2f64a3"/><text transform="translate(1007.5 829.5) scale(1.14 0.97)" font-family="Liberation Sans" font-weight="bold" font-size="14" fill="#e0000f" text-anchor="middle">z</text><text transform="translate(1008.9 853.4) scale(1.14 0.97)" font-family="Liberation Sans" font-weight="bold" font-size="14" fill="#e0000f" text-anchor="middle">y</text><text transform="translate(1031.5 853.4) scale(1.14 0.97)" font-family="Liberation Sans" font-weight="bold" font-size="14" fill="#e0000f" text-anchor="middle">x</text><path d="M1059.0 833.0 L1076.9 833.0" stroke="#2f64a3" stroke-width="2.6" fill="none"/><path d="M1080.7 833.0 L1076.4 836.2 L1076.4 829.8 Z" fill="#2f64a3"/><path d="M1060.4 831.7 L1060.4 848.5" stroke="#2f64a3" stroke-width="2.6" fill="none"/><path d="M1060.4 852.3 L1057.2 848.0 L1063.7 848.0 Z" fill="#2f64a3"/><text transform="translate(1053.4 829.5) scale(1.14 0.97)" font-family="Liberation Sans" font-weight="bold" font-size="14" fill="#e0000f" text-anchor="middle">z</text><text transform="translate(1076.5 829.6) scale(1.14 0.97)" font-family="Liberation Sans" font-weight="bold" font-size="14" fill="#e0000f" text-anchor="middle">y</text><text transform="translate(1053.4 853.4) scale(1.14 0.97)" font-family="Liberation Sans" font-weight="bold" font-size="14" fill="#e0000f" text-anchor="middle">x</text><path d="M1107.2 837.6 L1107.2 828.7" stroke="#2f64a3" stroke-width="2.3" fill="none"/><path d="M1107.2 825.0 L1110.2 829.2 L1104.2 829.2 Z" fill="#2f64a3"/><path d="M1106.2 836.7 L1116.8 836.7" stroke="#2f64a3" stroke-width="2.3" fill="none"/><path d="M1120.7 836.7 L1116.3 839.8 L1116.3 833.6 Z" fill="#2f64a3"/><path d="M1107.8 836.2 L1100.9 843.0" stroke="#2f64a3" stroke-width="2.3" fill="none"/><path d="M1098.3 845.6 L1099.2 840.5 L1103.4 844.8 Z" fill="#2f64a3"/><text transform="translate(1099.8 829.5) scale(1.14 0.97)" font-family="Liberation Sans" font-weight="bold" font-size="14" fill="#e0000f" text-anchor="middle">z</text><text transform="translate(1121.6 848.0) scale(1.14 0.97)" font-family="Liberation Sans" font-weight="bold" font-size="14" fill="#e0000f" text-anchor="middle">y</text><text transform="translate(1098.5 853.4) scale(1.14 0.97)" font-family="Liberation Sans" font-weight="bold" font-size="14" fill="#e0000f" text-anchor="middle">x</text><defs>
<linearGradient id="gc1" gradientUnits="userSpaceOnUse" x1="0" y1="876" x2="0" y2="892"><stop offset="0" stop-color="#8e8e8e"/><stop offset="0.35" stop-color="#5a5a5a"/><stop offset="0.68" stop-color="#262626"/><stop offset="1" stop-color="#9a9a9a"/></linearGradient>
<linearGradient id="gc2" gradientUnits="userSpaceOnUse" x1="987" y1="0" x2="1003" y2="0"><stop offset="0" stop-color="#9a9a9a"/><stop offset="0.3" stop-color="#262626"/><stop offset="0.62" stop-color="#5a5a5a"/><stop offset="1" stop-color="#9a9a9a"/></linearGradient>
<linearGradient id="gplus" x1="0" y1="0" x2="0" y2="1"><stop offset="0" stop-color="#ededed"/><stop offset="1" stop-color="#bdbdbd"/></linearGradient>
</defs><path d="M952.9 895.8 L952.9 870.4" stroke="#2f64a3" stroke-width="2.5" fill="none"/><path d="M952.9 866.1 L956.2 870.9 L949.6 870.9 Z" fill="#2f64a3"/><path d="M939.3 882.3 Q953 899.2 966.7 882.3 L962.8 880.4 Q953 890.8 943.2 880.4 Z" fill="#b2b2b2" stroke="#7d7d7d" stroke-width="0.4"/><path d="M940.9 882.9 Q953 897.0 965.1 882.9 L963.6 881.9 Q953 892.8 942.4 881.9 Z" fill="#343434"/><path d="M938.9 885.6 L939.1 880.8 L942.2 876.6 L946.4 883.4 L943 882 Z" fill="#8e8e8e" stroke="#4c4c4c" stroke-width="0.5" stroke-linejoin="round"/><path d="M967.2 885.4 L967 880.4 L962.5 875.8 L959.5 883.4 L963 882 Z" fill="#8e8e8e" stroke="#4c4c4c" stroke-width="0.5" stroke-linejoin="round"/><path d="M983.8 881.3 L1009.3 881.3" stroke="#2f64a3" stroke-width="2.4" fill="none"/><path d="M1013.4 881.3 L1008.8 884.6 L1008.8 877.9 Z" fill="#2f64a3"/><path d="M996.2 867.5 Q979.2 881.3 996.2 895.1 L998.2 891.2 Q987.8 881.3 998.2 871.4 Z" fill="#b2b2b2" stroke="#7d7d7d" stroke-width="0.4"/><path d="M995.6 869.1 Q981.4 881.3 995.6 893.5 L996.7 892 Q985.7 881.3 996.7 870.6 Z" fill="#343434"/><path d="M992.8 867.2 L997.7 866.7 L1002.8 871.2 L995.8 874.8 L996.8 871.4 Z" fill="#8e8e8e" stroke="#4c4c4c" stroke-width="0.5" stroke-linejoin="round"/><path d="M993 895.5 L997.9 895.9 L1004 890.5 L996 887.6 L996.9 891.2 Z" fill="#8e8e8e" stroke="#4c4c4c" stroke-width="0.5" stroke-linejoin="round"/><linearGradient id="gr0" gradientUnits="userSpaceOnUse" x1="1029.0" y1="867.9" x2="1039.8" y2="878.7"><stop offset="0" stop-color="#e5161f"/><stop offset="0.45" stop-color="#f0676c"/><stop offset="1" stop-color="#fdeced"/></linearGradient><path d="M1039.5 878.4 L1038.2 870.7 L1036.7 873.1 L1030.7 867.1 L1028.2 869.6 L1034.2 875.6 L1031.8 877.1 Z" fill="url(#gr0)" stroke="#d8232b" stroke-width="0.7" stroke-linejoin="round"/><linearGradient id="gr1" gradientUnits="userSpaceOnUse" x1="1056.8" y1="867.9" x2="1046.0" y2="878.7"><stop offset="0" stop-color="#e5161f"/><stop offset="0.45" stop-color="#f0676c"/><stop offset="1" stop-color="#fdeced"/></linearGradient><path d="M1046.3 878.4 L1054.0 877.1 L1051.6 875.6 L1057.6 869.6 L1055.1 867.1 L1049.1 873.1 L1047.6 870.7 Z" fill="url(#gr1)" stroke="#d8232b" stroke-width="0.7" stroke-linejoin="round"/><linearGradient id="gr2" gradientUnits="userSpaceOnUse" x1="1029.0" y1="895.7" x2="1039.8" y2="884.9"><stop offset="0" stop-color="#e5161f"/><stop offset="0.45" stop-color="#f0676c"/><stop offset="1" stop-color="#fdeced"/></linearGradient><path d="M1039.5 885.2 L1031.8 886.5 L1034.2 888.0 L1028.2 894.0 L1030.7 896.5 L1036.7 890.5 L1038.2 892.9 Z" fill="url(#gr2)" stroke="#d8232b" stroke-width="0.7" stroke-linejoin="round"/><linearGradient id="gr3" gradientUnits="userSpaceOnUse" x1="1056.8" y1="895.7" x2="1046.0" y2="884.9"><stop offset="0" stop-color="#e5161f"/><stop offset="0.45" stop-color="#f0676c"/><stop offset="1" stop-color="#fdeced"/></linearGradient><path d="M1046.3 885.2 L1047.6 892.9 L1049.1 890.5 L1055.1 896.5 L1057.6 894.0 L1051.6 888.0 L1054.0 886.5 Z" fill="url(#gr3)" stroke="#d8232b" stroke-width="0.7" stroke-linejoin="round"/><path d="M1074.6 872.1 H1102.4" stroke="#2f73c9" stroke-width="1.5" fill="none"/><path d="M1077.6 869.6 L1073.6 872.1 L1077.6 874.6 M1099.4 869.6 L1103.4 872.1 L1099.4 874.6" stroke="#2f73c9" stroke-width="1.5" fill="none" stroke-linecap="round" stroke-linejoin="round"/><rect x="1073" y="881.6" width="30" height="10.4" fill="#b9b9b9" stroke="#111" stroke-width="1.7"/><rect x="1076.5" y="882.3" width="1" height="2.6" fill="#333"/><rect x="1082.1" y="882.3" width="1" height="2.6" fill="#333"/><rect x="1087.2" y="882.3" width="1" height="2.6" fill="#333"/><rect x="1092.5" y="882.3" width="1" height="2.6" fill="#333"/><rect x="1097.9" y="882.3" width="1" height="2.6" fill="#333"/><path d="M1130.6 869.4 H1135.6 V879.2 H1145.8 V883.7 H1135.6 V893.6 H1130.6 V883.7 H1120.4 V879.2 H1130.6 Z" fill="url(#gplus)" stroke="#a2a2a2" stroke-width="0.8"/></svg>
<div class="t" style="left:1000.58px;top:929.00px;font-family:'Liberation Sans',sans-serif;font-size:12.50px;letter-spacing:0.000px;color:#333;">*</div>
<div class="abs" style="left:1182px;top:925px;width:1px;height:18px;background:#d4d4d4;"></div>
<svg class="abs" style="left:1198px;top:110px;" width="4" height="18" viewBox="1198 110 4 18" ><rect x="1201" y="114.0" width="1" height="1.3" fill="#222"/><rect x="1201" y="117.3" width="1" height="1.3" fill="#222"/><rect x="1201" y="120.2" width="1" height="1.3" fill="#222"/><rect x="1201" y="123.2" width="1" height="1.3" fill="#222"/></svg>
<svg class="abs" style="left:1185px;top:930px;" width="16" height="14" viewBox="1185 930 16 14" ><rect x="1196" y="934" width="2" height="2" fill="#b9b9b9"/><rect x="1193" y="937" width="2" height="2" fill="#b9b9b9"/><rect x="1196" y="937" width="2" height="2" fill="#b9b9b9"/><rect x="1190" y="940" width="2" height="2" fill="#b9b9b9"/><rect x="1193" y="940" width="2" height="2" fill="#b9b9b9"/><rect x="1196" y="940" width="2" height="2" fill="#b9b9b9"/></svg>
<svg class="abs" style="left:0;top:0;pointer-events:none" width="1202" height="945" viewBox="0 0 1202 945"><path d="M0 0 H1202 V945 H0 Z M8.5 0.5 Q0.5 0.5 0.5 8.5 V936.5 Q0.5 944.5 8.5 944.5 H1193.5 Q1201.5 944.5 1201.5 936.5 V8.5 Q1201.5 0.5 1193.5 0.5 Z" fill="#a6a6a6" fill-rule="evenodd"/><path d="M8.5 0.5 Q0.5 0.5 0.5 8.5 V936.5 Q0.5 944.5 8.5 944.5 H1193.5 Q1201.5 944.5 1201.5 936.5 V8.5 Q1201.5 0.5 1193.5 0.5 Z" fill="none" stroke="#8e8e8e" stroke-width="1"/></svg>
</div>
</body>
</html>
